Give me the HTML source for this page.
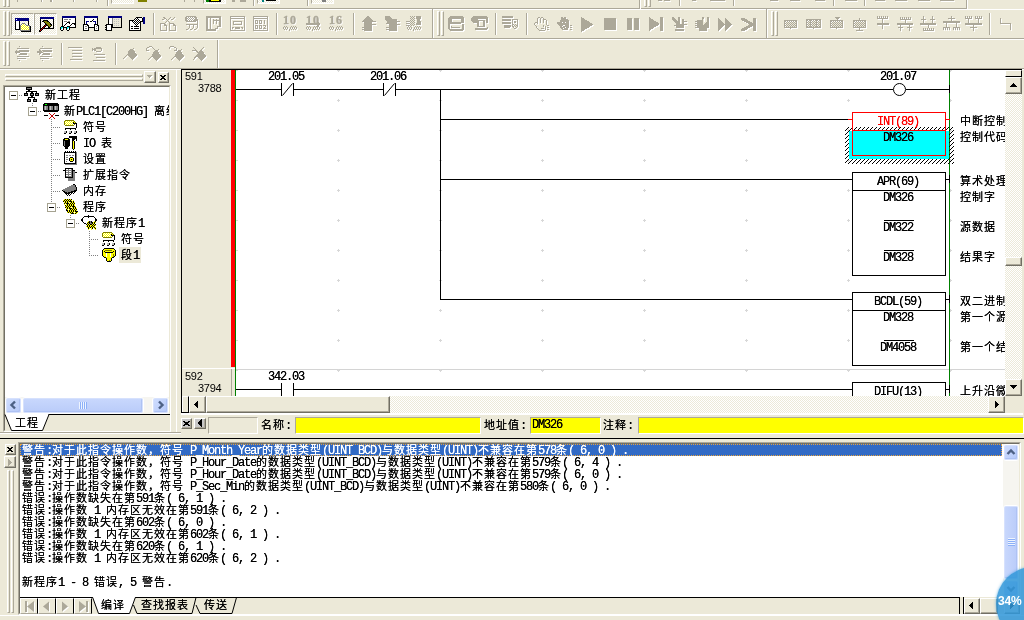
<!DOCTYPE html>
<html><head><meta charset="utf-8"><title>CX-Programmer</title>
<style>
html,body{margin:0;padding:0}
body{will-change:transform;width:1024px;height:620px;overflow:hidden;background:#ECE9D8;position:relative;
 font-family:"Liberation Sans","Noto Sans CJK SC",sans-serif;font-size:12px;color:#000}
body div{position:absolute;box-sizing:border-box}
svg{position:absolute;overflow:visible}
.t{white-space:pre;text-shadow:0 0 0;margin-top:1px;line-height:12px;height:12px;font-size:11px;letter-spacing:1px;font-family:"Liberation Mono","Noto Sans CJK SC",monospace}
.l{font-family:"Liberation Mono",monospace;font-size:12px;letter-spacing:-1.2px}
</style></head>
<body>
<div style="left:0px;top:8px;width:967px;height:1px;background:#ACA899;"></div>
<div style="left:0px;top:9px;width:1024px;height:1px;background:#fff;"></div>
<div style="left:0px;top:38px;width:1024px;height:1px;background:#ACA899;"></div>
<div style="left:0px;top:39px;width:1024px;height:1px;background:#fff;"></div>
<div style="left:0px;top:68px;width:1024px;height:1px;background:#ACA899;"></div>
<div style="left:0px;top:69px;width:1024px;height:1px;background:#fff;"></div>
<div style="left:3px;top:11px;width:3px;height:25px;border-left:1px solid #fff;border-top:1px solid #fff;border-right:1px solid #ACA899;border-bottom:1px solid #ACA899;"></div>
<div style="left:7px;top:11px;width:3px;height:25px;border-left:1px solid #fff;border-top:1px solid #fff;border-right:1px solid #ACA899;border-bottom:1px solid #ACA899;"></div>
<div style="left:3px;top:41px;width:3px;height:25px;border-left:1px solid #fff;border-top:1px solid #fff;border-right:1px solid #ACA899;border-bottom:1px solid #ACA899;"></div>
<div style="left:7px;top:41px;width:3px;height:25px;border-left:1px solid #fff;border-top:1px solid #fff;border-right:1px solid #ACA899;border-bottom:1px solid #ACA899;"></div>
<div style="left:11px;top:13px;width:23px;height:22px;border-top:1px solid #ACA899;border-left:1px solid #ACA899;border-right:1px solid #fff;border-bottom:1px solid #fff;background-image:conic-gradient(#fff 25%,#ECE9D8 0 50%,#fff 0 75%,#ECE9D8 0);background-size:2px 2px;"></div>
<div style="left:34px;top:13px;width:23px;height:22px;border-top:1px solid #ACA899;border-left:1px solid #ACA899;border-right:1px solid #fff;border-bottom:1px solid #fff;background-image:conic-gradient(#fff 25%,#ECE9D8 0 50%,#fff 0 75%,#ECE9D8 0);background-size:2px 2px;"></div>
<svg style="left:15px;top:18px" width="16" height="14" shape-rendering="crispEdges"><path d="M0 0h14v1h-14zM0 1h1v1h-1zM2 1h12v1h-12zM0 2h14v1h-14z" fill="#000080"/><path d="M1 1h1v1h-1zM1 3h3v1h-3zM1 4h3v1h-3zM1 5h3v1h-3zM1 6h3v1h-3zM7 6h1v1h-1zM9 6h1v1h-1zM1 7h3v1h-3zM6 7h1v1h-1zM8 7h1v1h-1zM10 7h1v1h-1zM1 8h3v1h-3zM7 8h1v1h-1zM9 8h1v1h-1zM11 8h1v1h-1zM13 8h1v1h-1zM1 9h3v1h-3zM6 9h1v1h-1zM8 9h1v1h-1zM10 9h1v1h-1zM12 9h1v1h-1zM1 10h3v1h-3zM7 10h1v1h-1zM9 10h1v1h-1zM11 10h1v1h-1zM13 10h1v1h-1zM6 11h1v1h-1zM8 11h1v1h-1zM10 11h1v1h-1zM12 11h1v1h-1z" fill="#fff"/><path d="M0 3h1v1h-1zM4 3h1v1h-1zM13 3h1v1h-1zM0 4h1v1h-1zM4 4h1v1h-1zM13 4h1v1h-1zM0 5h1v1h-1zM4 5h1v1h-1zM13 5h1v1h-1zM0 6h1v1h-1zM4 6h1v1h-1zM13 6h1v1h-1zM0 7h1v1h-1zM4 7h1v1h-1zM0 8h1v1h-1zM4 8h1v1h-1zM15 8h1v1h-1zM0 9h1v1h-1zM4 9h1v1h-1zM15 9h1v1h-1zM0 10h1v1h-1zM4 10h1v1h-1zM15 10h1v1h-1zM0 11h5v1h-5zM15 11h1v1h-1zM15 12h1v1h-1zM6 13h10v1h-10z" fill="#000"/><path d="M7 5h3v1h-3zM6 6h1v1h-1zM10 6h1v1h-1zM5 7h1v1h-1zM11 7h4v1h-4zM5 8h1v1h-1zM14 8h1v1h-1zM5 9h1v1h-1zM14 9h1v1h-1zM5 10h1v1h-1zM14 10h1v1h-1zM5 11h1v1h-1zM14 11h1v1h-1zM5 12h10v1h-10z" fill="#808080"/><path d="M8 6h1v1h-1zM7 7h1v1h-1zM9 7h1v1h-1zM6 8h1v1h-1zM8 8h1v1h-1zM10 8h1v1h-1zM12 8h1v1h-1zM7 9h1v1h-1zM9 9h1v1h-1zM11 9h1v1h-1zM13 9h1v1h-1zM6 10h1v1h-1zM8 10h1v1h-1zM10 10h1v1h-1zM12 10h1v1h-1zM7 11h1v1h-1zM9 11h1v1h-1zM11 11h1v1h-1zM13 11h1v1h-1z" fill="#ffff00"/></svg>
<svg style="left:38px;top:17px" width="16" height="15" shape-rendering="crispEdges"><path d="M2 0h14v1h-14zM2 1h14v1h-14z" fill="#000080"/><path d="M2 2h1v1h-1zM15 2h1v1h-1zM2 3h1v1h-1zM5 3h5v1h-5zM15 3h1v1h-1zM2 4h1v1h-1zM4 4h2v1h-2zM9 4h2v1h-2zM15 4h1v1h-1zM2 5h1v1h-1zM6 5h1v1h-1zM11 5h1v1h-1zM15 5h1v1h-1zM2 6h1v1h-1zM7 6h1v1h-1zM12 6h1v1h-1zM15 6h1v1h-1zM2 7h1v1h-1zM7 7h2v1h-2zM12 7h2v1h-2zM15 7h1v1h-1zM2 8h1v1h-1zM6 8h1v1h-1zM8 8h2v1h-2zM13 8h1v1h-1zM15 8h1v1h-1zM2 9h1v1h-1zM5 9h1v1h-1zM7 9h1v1h-1zM10 9h1v1h-1zM12 9h1v1h-1zM15 9h1v1h-1zM2 10h1v1h-1zM4 10h1v1h-1zM6 10h1v1h-1zM10 10h2v1h-2zM15 10h1v1h-1zM2 11h2v1h-2zM5 11h11v1h-11zM2 12h1v1h-1zM4 12h1v1h-1zM1 13h1v1h-1zM3 13h1v1h-1zM1 14h2v1h-2z" fill="#000"/><path d="M6 4h3v1h-3zM7 5h4v1h-4zM8 6h4v1h-4zM9 7h3v1h-3zM10 8h3v1h-3zM11 9h1v1h-1z" fill="#808000"/><path d="M7 8h1v1h-1zM6 9h1v1h-1zM5 10h1v1h-1zM4 11h1v1h-1zM3 12h1v1h-1zM2 13h1v1h-1z" fill="#c00000"/></svg>
<svg style="left:60px;top:16px" width="16" height="15" shape-rendering="crispEdges"><path d="M2 0h14v1h-14zM2 1h14v1h-14z" fill="#000080"/><path d="M2 2h1v1h-1zM15 2h1v1h-1zM2 3h1v1h-1zM15 3h1v1h-1zM2 4h1v1h-1zM15 4h1v1h-1zM2 5h1v1h-1zM15 5h1v1h-1zM2 6h1v1h-1zM7 6h3v1h-3zM15 6h1v1h-1zM2 7h1v1h-1zM6 7h1v1h-1zM9 7h1v1h-1zM12 7h4v1h-4zM2 8h1v1h-1zM5 8h1v1h-1zM11 8h1v1h-1zM14 8h2v1h-2zM2 9h1v1h-1zM4 9h1v1h-1zM10 9h1v1h-1zM15 9h1v1h-1zM1 10h3v1h-3zM7 10h3v1h-3zM15 10h1v1h-1zM0 11h1v1h-1zM3 11h4v1h-4zM9 11h7v1h-7zM0 12h1v1h-1zM3 12h1v1h-1zM6 12h1v1h-1zM9 12h1v1h-1zM0 13h1v1h-1zM3 13h1v1h-1zM6 13h1v1h-1zM9 13h1v1h-1zM1 14h2v1h-2zM7 14h2v1h-2z" fill="#000"/><path d="M3 2h12v1h-12zM3 3h1v1h-1zM8 3h1v1h-1zM11 3h4v1h-4zM3 4h12v1h-12zM3 5h1v1h-1zM7 5h1v1h-1zM10 5h5v1h-5zM3 6h4v1h-4zM10 6h5v1h-5zM3 7h3v1h-3zM7 7h2v1h-2zM10 7h2v1h-2zM3 8h2v1h-2zM6 8h5v1h-5zM12 8h2v1h-2zM3 9h1v1h-1zM5 9h5v1h-5zM11 9h4v1h-4zM4 10h3v1h-3zM10 10h5v1h-5zM2 12h1v1h-1zM8 12h1v1h-1zM1 13h2v1h-2zM7 13h2v1h-2z" fill="#fff"/><path d="M4 3h4v1h-4zM9 3h2v1h-2zM4 5h3v1h-3zM8 5h2v1h-2z" fill="#808080"/><path d="M1 11h2v1h-2zM7 11h2v1h-2zM1 12h1v1h-1zM7 12h1v1h-1z" fill="#00ffff"/></svg>
<svg style="left:83px;top:16px" width="16" height="15" shape-rendering="crispEdges"><path d="M1 0h14v1h-14zM1 1h14v1h-14zM3 5h3v1h-3zM10 5h3v1h-3zM3 6h1v1h-1zM12 6h1v1h-1zM3 7h1v1h-1zM12 7h1v1h-1z" fill="#000080"/><path d="M1 2h1v1h-1zM14 2h1v1h-1zM1 3h1v1h-1zM10 3h1v1h-1zM14 3h1v1h-1zM1 4h1v1h-1zM9 4h1v1h-1zM14 4h1v1h-1zM1 5h1v1h-1zM7 5h2v1h-2zM14 5h1v1h-1zM1 6h1v1h-1zM14 6h1v1h-1zM1 7h1v1h-1zM14 7h1v1h-1zM0 8h5v1h-5zM11 8h4v1h-4zM0 9h1v1h-1zM4 9h2v1h-2zM11 9h1v1h-1zM14 9h2v1h-2zM0 10h1v1h-1zM5 10h1v1h-1zM11 10h1v1h-1zM15 10h1v1h-1zM0 11h1v1h-1zM5 11h7v1h-7zM15 11h1v1h-1zM0 12h1v1h-1zM5 12h1v1h-1zM11 12h1v1h-1zM15 12h1v1h-1zM0 13h1v1h-1zM5 13h1v1h-1zM11 13h1v1h-1zM15 13h1v1h-1zM0 14h6v1h-6zM11 14h5v1h-5z" fill="#000"/><path d="M2 2h12v1h-12zM2 3h8v1h-8zM11 3h3v1h-3zM2 4h7v1h-7zM10 4h4v1h-4zM2 5h1v1h-1zM6 5h1v1h-1zM9 5h1v1h-1zM13 5h1v1h-1zM2 6h1v1h-1zM4 6h8v1h-8zM13 6h1v1h-1zM2 7h1v1h-1zM4 7h8v1h-8zM13 7h1v1h-1zM5 8h6v1h-6zM1 9h3v1h-3zM6 9h5v1h-5zM12 9h2v1h-2zM1 10h1v1h-1zM4 10h1v1h-1zM6 10h5v1h-5zM12 10h1v1h-1zM14 10h1v1h-1zM1 11h4v1h-4zM12 11h3v1h-3zM1 12h1v1h-1zM4 12h1v1h-1zM12 12h1v1h-1zM14 12h1v1h-1zM1 13h4v1h-4zM12 13h3v1h-3z" fill="#fff"/><path d="M2 10h2v1h-2zM13 10h1v1h-1zM2 12h2v1h-2zM13 12h1v1h-1z" fill="#808080"/></svg>
<svg style="left:105px;top:16px" width="17" height="15" shape-rendering="crispEdges"><path d="M3 0h14v1h-14zM3 1h14v1h-14z" fill="#000080"/><path d="M3 2h1v1h-1zM16 2h1v1h-1zM3 3h1v1h-1zM16 3h1v1h-1zM3 4h1v1h-1zM16 4h1v1h-1zM3 5h1v1h-1zM16 5h1v1h-1zM3 6h1v1h-1zM16 6h1v1h-1zM3 7h1v1h-1zM16 7h1v1h-1zM1 8h7v1h-7zM16 8h1v1h-1zM0 9h2v1h-2zM6 9h2v1h-2zM16 9h1v1h-1zM1 10h1v1h-1zM6 10h2v1h-2zM16 10h1v1h-1zM0 11h2v1h-2zM6 11h11v1h-11zM1 12h1v1h-1zM6 12h1v1h-1zM0 13h2v1h-2zM6 13h1v1h-1zM1 14h6v1h-6z" fill="#000"/><path d="M4 2h3v1h-3zM4 3h3v1h-3zM4 4h3v1h-3zM4 5h3v1h-3zM4 6h3v1h-3zM4 7h3v1h-3zM2 9h4v1h-4zM2 10h4v1h-4zM2 11h4v1h-4zM2 12h4v1h-4zM2 13h4v1h-4z" fill="#fff"/><path d="M7 2h1v1h-1zM7 3h1v1h-1zM7 4h1v1h-1zM7 5h1v1h-1zM7 6h1v1h-1zM7 7h1v1h-1z" fill="#808080"/><path d="M8 2h8v1h-8zM8 3h1v1h-1zM10 3h1v1h-1zM12 3h1v1h-1zM14 3h2v1h-2zM8 4h8v1h-8zM8 5h1v1h-1zM10 5h1v1h-1zM12 5h1v1h-1zM14 5h2v1h-2zM8 6h8v1h-8zM8 7h1v1h-1zM10 7h1v1h-1zM12 7h1v1h-1zM14 7h2v1h-2zM8 8h8v1h-8zM8 9h1v1h-1zM10 9h1v1h-1zM12 9h1v1h-1zM14 9h2v1h-2zM8 10h8v1h-8z" fill="#ECE9D8"/><path d="M9 3h1v1h-1zM11 3h1v1h-1zM13 3h1v1h-1zM9 5h1v1h-1zM11 5h1v1h-1zM13 5h1v1h-1zM9 7h1v1h-1zM11 7h1v1h-1zM13 7h1v1h-1zM9 9h1v1h-1zM11 9h1v1h-1zM13 9h1v1h-1z" fill="#C0C0C0"/></svg>
<svg style="left:129px;top:17px" width="16" height="14" shape-rendering="crispEdges"><path d="M7 0h6v1h-6zM6 1h1v1h-1zM8 1h1v1h-1zM13 1h1v1h-1zM5 2h1v1h-1zM7 2h1v1h-1zM9 2h1v1h-1zM13 2h1v1h-1zM0 3h5v1h-5zM6 3h1v1h-1zM8 3h1v1h-1zM10 3h1v1h-1zM13 3h1v1h-1zM0 4h1v1h-1zM3 4h1v1h-1zM5 4h1v1h-1zM7 4h1v1h-1zM9 4h1v1h-1zM11 4h3v1h-3zM0 5h1v1h-1zM4 5h1v1h-1zM6 5h1v1h-1zM8 5h1v1h-1zM10 5h2v1h-2zM0 6h1v1h-1zM5 6h1v1h-1zM7 6h1v1h-1zM9 6h1v1h-1zM11 6h1v1h-1zM0 7h1v1h-1zM6 7h1v1h-1zM8 7h1v1h-1zM11 7h1v1h-1zM0 8h1v1h-1zM7 8h1v1h-1zM11 8h1v1h-1zM0 9h1v1h-1zM2 9h2v1h-2zM5 9h5v1h-5zM11 9h1v1h-1zM0 10h1v1h-1zM11 10h1v1h-1zM0 11h1v1h-1zM2 11h2v1h-2zM5 11h5v1h-5zM11 11h1v1h-1zM0 12h1v1h-1zM11 12h1v1h-1zM0 13h12v1h-12z" fill="#000"/><path d="M14 0h2v1h-2zM14 1h2v1h-2zM14 2h2v1h-2zM14 3h2v1h-2zM14 4h2v1h-2zM14 5h2v1h-2zM14 6h2v1h-2z" fill="#000080"/><path d="M7 1h1v1h-1zM9 1h4v1h-4zM6 2h1v1h-1zM8 2h1v1h-1zM10 2h3v1h-3zM5 3h1v1h-1zM7 3h1v1h-1zM9 3h1v1h-1zM11 3h2v1h-2zM1 4h2v1h-2zM4 4h1v1h-1zM6 4h1v1h-1zM8 4h1v1h-1zM10 4h1v1h-1zM1 5h3v1h-3zM5 5h1v1h-1zM7 5h1v1h-1zM9 5h1v1h-1zM1 6h4v1h-4zM6 6h1v1h-1zM8 6h1v1h-1zM10 6h1v1h-1zM1 7h5v1h-5zM7 7h1v1h-1zM9 7h2v1h-2zM1 8h6v1h-6zM8 8h3v1h-3zM1 9h1v1h-1zM4 9h1v1h-1zM10 9h1v1h-1zM1 10h10v1h-10zM1 11h1v1h-1zM4 11h1v1h-1zM10 11h1v1h-1zM1 12h10v1h-10z" fill="#fff"/></svg>
<div style="left:153px;top:13px;width:1px;height:22px;background:#ACA899;"></div>
<div style="left:154px;top:13px;width:1px;height:22px;background:#fff;"></div>
<div style="left:276px;top:13px;width:1px;height:22px;background:#ACA899;"></div>
<div style="left:277px;top:13px;width:1px;height:22px;background:#fff;"></div>
<div style="left:353px;top:13px;width:1px;height:22px;background:#ACA899;"></div>
<div style="left:354px;top:13px;width:1px;height:22px;background:#fff;"></div>
<div style="left:495px;top:13px;width:1px;height:22px;background:#ACA899;"></div>
<div style="left:496px;top:13px;width:1px;height:22px;background:#fff;"></div>
<div style="left:526px;top:13px;width:1px;height:22px;background:#ACA899;"></div>
<div style="left:527px;top:13px;width:1px;height:22px;background:#fff;"></div>
<div style="left:989px;top:13px;width:1px;height:22px;background:#ACA899;"></div>
<div style="left:990px;top:13px;width:1px;height:22px;background:#fff;"></div>
<div style="left:61px;top:43px;width:1px;height:22px;background:#ACA899;"></div>
<div style="left:62px;top:43px;width:1px;height:22px;background:#fff;"></div>
<div style="left:115px;top:43px;width:1px;height:22px;background:#ACA899;"></div>
<div style="left:116px;top:43px;width:1px;height:22px;background:#fff;"></div>
<div style="left:432px;top:9px;width:1px;height:29px;background:#ACA899;"></div>
<div style="left:433px;top:9px;width:1px;height:29px;background:#fff;"></div>
<div style="left:766px;top:9px;width:1px;height:29px;background:#ACA899;"></div>
<div style="left:767px;top:9px;width:1px;height:29px;background:#fff;"></div>
<div style="left:217px;top:40px;width:1px;height:28px;background:#ACA899;"></div>
<div style="left:218px;top:40px;width:1px;height:28px;background:#fff;"></div>
<div style="left:437px;top:11px;width:3px;height:25px;border-left:1px solid #fff;border-top:1px solid #fff;border-right:1px solid #ACA899;border-bottom:1px solid #ACA899;"></div>
<div style="left:441px;top:11px;width:3px;height:25px;border-left:1px solid #fff;border-top:1px solid #fff;border-right:1px solid #ACA899;border-bottom:1px solid #ACA899;"></div>
<div style="left:771px;top:11px;width:3px;height:25px;border-left:1px solid #fff;border-top:1px solid #fff;border-right:1px solid #ACA899;border-bottom:1px solid #ACA899;"></div>
<div style="left:775px;top:11px;width:3px;height:25px;border-left:1px solid #fff;border-top:1px solid #fff;border-right:1px solid #ACA899;border-bottom:1px solid #ACA899;"></div>
<svg style="left:160px;top:14px" width="17" height="18" shape-rendering="crispEdges"><g transform="translate(1,1)"><path d="M2 5h2v1h-2zM11 5h2v1h-2zM13 4h1v1h-1zM14 3h1v1h-1zM4 4h1v1h-1zM3 3h1v1h-1z" fill="#fff"/><path d="M0.5 9.5h4l2 2v5h-6z M4.5 9.5v2h2 M9.5 9.5h4l2 2v5h-6z M13.5 9.5v2h2 M4.5 3.5l6 6 M10.5 3.5l-6 6" stroke="#fff" fill="none"/></g><path d="M2 5h2v1h-2zM11 5h2v1h-2zM13 4h1v1h-1zM14 3h1v1h-1zM4 4h1v1h-1zM3 3h1v1h-1z" fill="#ACA899"/><path d="M0.5 9.5h4l2 2v5h-6z M4.5 9.5v2h2 M9.5 9.5h4l2 2v5h-6z M13.5 9.5v2h2 M4.5 3.5l6 6 M10.5 3.5l-6 6" stroke="#ACA899" fill="none"/></svg>
<svg style="left:185px;top:14px" width="15" height="18" shape-rendering="crispEdges"><g transform="translate(1,1)"><path d="M1 2h9l2 2v2l-2 2h-9l-1-1v-4zM1 10h12v1h-12zM12 5h1v5h-1zM4 11h1v3h-1zM3 14h1v1h-1zM1 15h2v1h-2zM8 11h1v3h-1zM7 14h1v1h-1zM5 15h2v1h-2zM12 11h1v3h-1zM11 14h1v1h-1zM9 15h2v1h-2z" fill="#fff"/></g><path d="M1 2h9l2 2v2l-2 2h-9l-1-1v-4zM1 10h12v1h-12zM12 5h1v5h-1zM4 11h1v3h-1zM3 14h1v1h-1zM1 15h2v1h-2zM8 11h1v3h-1zM7 14h1v1h-1zM5 15h2v1h-2zM12 11h1v3h-1zM11 14h1v1h-1zM9 15h2v1h-2z" fill="#ACA899"/><path d="M2 3h1v1h-1zM4 3h1v1h-1zM6 3h1v1h-1zM8 3h1v1h-1zM2 5h1v1h-1zM4 5h1v1h-1zM6 5h1v1h-1zM8 5h1v1h-1zM3 4h1v1h-1zM5 4h1v1h-1zM7 4h1v1h-1zM9 4h1v1h-1zM3 6h1v1h-1zM5 6h1v1h-1zM7 6h1v1h-1z" fill="#fff"/></svg>
<svg style="left:206px;top:16px" width="16" height="16" shape-rendering="crispEdges"><g transform="translate(1,1)"><path d="M0 0h15v2h-15zM0 0h2v15h-2zM4 2h1v11h-1zM7 3h1v5h-1zM10 3h1v5h-1zM8 4h6v1h-6zM13 2h2v8h-2zM11 10h4v1h-4zM11 10h1v2h-1zM9 12h3v1h-3zM9 12h1v2h-1zM2 13h8v2h-8z" fill="#fff"/></g><path d="M0 0h15v2h-15zM0 0h2v15h-2zM4 2h1v11h-1zM7 3h1v5h-1zM10 3h1v5h-1zM8 4h6v1h-6zM13 2h2v8h-2zM11 10h4v1h-4zM11 10h1v2h-1zM9 12h3v1h-3zM9 12h1v2h-1zM2 13h8v2h-8z" fill="#ACA899"/></svg>
<svg style="left:230px;top:16px" width="16" height="16" shape-rendering="crispEdges"><g transform="translate(1,1)"><path d="M0 0h15v1h-15zM0 2h15v1h-15zM0 0h1v15h-1zM14 0h1v15h-1zM0 14h15v1h-15zM3 5h9v1h-9zM3 8h9v1h-9zM3 5h1v4h-1zM11 5h1v4h-1zM2 11h2v1h-2zM5 11h5v1h-5zM11 11h2v1h-2zM2 12h1v1h-1zM5 12h5v1h-5zM12 12h1v1h-1z" fill="#fff"/></g><path d="M0 0h15v1h-15zM0 2h15v1h-15zM0 0h1v15h-1zM14 0h1v15h-1zM0 14h15v1h-15zM3 5h9v1h-9zM3 8h9v1h-9zM3 5h1v4h-1zM11 5h1v4h-1zM2 11h2v1h-2zM5 11h5v1h-5zM11 11h2v1h-2zM2 12h1v1h-1zM5 12h5v1h-5zM12 12h1v1h-1z" fill="#ACA899"/></svg>
<svg style="left:253px;top:16px" width="16" height="16" shape-rendering="crispEdges"><g transform="translate(1,1)"><path d="M0 0h15v1h-15zM0 2h15v1h-15zM0 0h1v15h-1zM14 0h1v15h-1zM0 14h15v1h-15zM2 4h3v1h-3zM2 7h3v1h-3zM2 4h1v4h-1zM4 4h1v4h-1zM6 4h3v1h-3zM6 7h3v1h-3zM6 4h1v4h-1zM8 4h1v4h-1zM11 4h1v4h-1zM2 9h3v1h-3zM2 12h3v1h-3zM2 9h1v4h-1zM4 9h1v4h-1zM6 9h3v1h-3zM6 12h3v1h-3zM6 9h1v4h-1zM8 9h1v4h-1zM10 9h3v1h-3zM12 10h1v1h-1zM11 11h1v1h-1zM10 12h3v1h-3z" fill="#fff"/></g><path d="M0 0h15v1h-15zM0 2h15v1h-15zM0 0h1v15h-1zM14 0h1v15h-1zM0 14h15v1h-15zM2 4h3v1h-3zM2 7h3v1h-3zM2 4h1v4h-1zM4 4h1v4h-1zM6 4h3v1h-3zM6 7h3v1h-3zM6 4h1v4h-1zM8 4h1v4h-1zM11 4h1v4h-1zM2 9h3v1h-3zM2 12h3v1h-3zM2 9h1v4h-1zM4 9h1v4h-1zM6 9h3v1h-3zM6 12h3v1h-3zM6 9h1v4h-1zM8 9h1v4h-1zM10 9h3v1h-3zM12 10h1v1h-1zM11 11h1v1h-1zM10 12h3v1h-3z" fill="#ACA899"/></svg>
<div style="left:283px;top:13px;width:20px;height:14px;font:bold 12px/14px 'Liberation Serif',serif;color:#ACA899;text-shadow:1px 1px 0 #fff;letter-spacing:1px;-webkit-text-stroke:0.4px #ACA899">10</div>
<svg style="left:283px;top:16px" width="17" height="16" shape-rendering="crispEdges"><g transform="translate(1,1)"><path d="M0 11h1v1h-1zM0 12h1v1h-1zM1 10h1v1h-1zM1 13h1v1h-1zM3 10h1v1h-1zM4 11h1v1h-1zM4 12h1v1h-1zM3 13h1v1h-1zM2 11h1v1h-1zM2 12h1v1h-1zM6 13h1v1h-1zM6 14h1v1h-1zM8 10h1v1h-1zM9 11h1v1h-1zM9 12h1v1h-1zM8 13h1v1h-1zM7 11h1v1h-1zM7 12h1v1h-1zM10 10h1v1h-1zM11 11h1v1h-1zM11 12h1v1h-1zM10 13h1v1h-1zM12 10h1v1h-1zM13 11h1v1h-1zM13 12h1v1h-1zM12 13h1v1h-1z" fill="#fff"/></g><path d="M0 11h1v1h-1zM0 12h1v1h-1zM1 10h1v1h-1zM1 13h1v1h-1zM3 10h1v1h-1zM4 11h1v1h-1zM4 12h1v1h-1zM3 13h1v1h-1zM2 11h1v1h-1zM2 12h1v1h-1zM6 13h1v1h-1zM6 14h1v1h-1zM8 10h1v1h-1zM9 11h1v1h-1zM9 12h1v1h-1zM8 13h1v1h-1zM7 11h1v1h-1zM7 12h1v1h-1zM10 10h1v1h-1zM11 11h1v1h-1zM11 12h1v1h-1zM10 13h1v1h-1zM12 10h1v1h-1zM13 11h1v1h-1zM13 12h1v1h-1zM12 13h1v1h-1z" fill="#ACA899"/></svg>
<div style="left:306px;top:13px;width:20px;height:14px;font:bold 12px/14px 'Liberation Serif',serif;color:#ACA899;text-shadow:1px 1px 0 #fff;letter-spacing:1px;-webkit-text-stroke:0.4px #ACA899">10</div>
<svg style="left:306px;top:16px" width="17" height="16" shape-rendering="crispEdges"><g transform="translate(1,1)"><path d="M0 11h1v1h-1zM0 12h1v1h-1zM1 10h1v1h-1zM1 13h1v1h-1zM3 10h1v1h-1zM4 11h1v1h-1zM4 12h1v1h-1zM3 13h1v1h-1zM2 11h1v1h-1zM2 12h1v1h-1zM6 13h1v1h-1zM6 14h1v1h-1zM8 10h1v1h-1zM9 11h1v1h-1zM9 12h1v1h-1zM8 13h1v1h-1zM7 11h1v1h-1zM7 12h1v1h-1zM10 10h1v1h-1zM11 11h1v1h-1zM11 12h1v1h-1zM10 13h1v1h-1zM12 10h1v1h-1zM13 11h1v1h-1zM13 12h1v1h-1zM12 13h1v1h-1zM0 7h14v2h-14zM11 5l4 3l-4 3z" fill="#fff"/></g><path d="M0 11h1v1h-1zM0 12h1v1h-1zM1 10h1v1h-1zM1 13h1v1h-1zM3 10h1v1h-1zM4 11h1v1h-1zM4 12h1v1h-1zM3 13h1v1h-1zM2 11h1v1h-1zM2 12h1v1h-1zM6 13h1v1h-1zM6 14h1v1h-1zM8 10h1v1h-1zM9 11h1v1h-1zM9 12h1v1h-1zM8 13h1v1h-1zM7 11h1v1h-1zM7 12h1v1h-1zM10 10h1v1h-1zM11 11h1v1h-1zM11 12h1v1h-1zM10 13h1v1h-1zM12 10h1v1h-1zM13 11h1v1h-1zM13 12h1v1h-1zM12 13h1v1h-1zM0 7h14v2h-14zM11 5l4 3l-4 3z" fill="#ACA899"/></svg>
<div style="left:329px;top:13px;width:20px;height:14px;font:bold 12px/14px 'Liberation Serif',serif;color:#ACA899;text-shadow:1px 1px 0 #fff;letter-spacing:1px;-webkit-text-stroke:0.4px #ACA899">16</div>
<svg style="left:329px;top:16px" width="17" height="16" shape-rendering="crispEdges"><g transform="translate(1,1)"><path d="M0 11h1v1h-1zM0 12h1v1h-1zM1 10h1v1h-1zM1 13h1v1h-1zM3 10h1v1h-1zM4 11h1v1h-1zM4 12h1v1h-1zM3 13h1v1h-1zM2 11h1v1h-1zM2 12h1v1h-1zM6 13h1v1h-1zM6 14h1v1h-1zM8 10h1v1h-1zM9 11h1v1h-1zM9 12h1v1h-1zM8 13h1v1h-1zM7 11h1v1h-1zM7 12h1v1h-1zM10 10h1v1h-1zM11 11h1v1h-1zM11 12h1v1h-1zM10 13h1v1h-1zM12 10h1v1h-1zM13 11h1v1h-1zM13 12h1v1h-1zM12 13h1v1h-1z" fill="#fff"/></g><path d="M0 11h1v1h-1zM0 12h1v1h-1zM1 10h1v1h-1zM1 13h1v1h-1zM3 10h1v1h-1zM4 11h1v1h-1zM4 12h1v1h-1zM3 13h1v1h-1zM2 11h1v1h-1zM2 12h1v1h-1zM6 13h1v1h-1zM6 14h1v1h-1zM8 10h1v1h-1zM9 11h1v1h-1zM9 12h1v1h-1zM8 13h1v1h-1zM7 11h1v1h-1zM7 12h1v1h-1zM10 10h1v1h-1zM11 11h1v1h-1zM11 12h1v1h-1zM10 13h1v1h-1zM12 10h1v1h-1zM13 11h1v1h-1zM13 12h1v1h-1zM12 13h1v1h-1z" fill="#ACA899"/></svg>
<svg style="left:361px;top:16px" width="17" height="16" shape-rendering="crispEdges"><g transform="translate(1,1)"><path d="M6 0h1l6 6h-2v9h-8v-9h-3zM11 5h4v1h-4zM11 8h4v1h-4zM1 11h2v1h-2zM1 13h2v1h-2z" fill="#fff"/></g><path d="M6 0h1l6 6h-2v9h-8v-9h-3zM11 5h4v1h-4zM11 8h4v1h-4zM1 11h2v1h-2zM1 13h2v1h-2z" fill="#ACA899"/></svg>
<svg style="left:385px;top:16px" width="17" height="16" shape-rendering="crispEdges"><g transform="translate(1,1)"><path d="M0 0h5l2 3h5v12h-8v-7h-4l2-2l-2-2zM12 5h3v1h-3zM12 8h3v1h-3zM1 11h3v1h-3zM1 13h3v1h-3z" fill="#fff"/></g><path d="M0 0h5l2 3h5v12h-8v-7h-4l2-2l-2-2zM12 5h3v1h-3zM12 8h3v1h-3zM1 11h3v1h-3zM1 13h3v1h-3z" fill="#ACA899"/></svg>
<svg style="left:406px;top:16px" width="18" height="16" shape-rendering="crispEdges"><g transform="translate(1,1)"><path d="M0 5h4v1h-4zM0 7h4v1h-4zM0 9h4v1h-4zM4 0h1v1h-1zM6 0h1v1h-1zM8 0h1v1h-1zM5 1h1v1h-1zM7 1h1v1h-1zM4 2h1v1h-1zM6 2h1v1h-1zM8 2h1v1h-1zM5 3h1v1h-1zM7 3h1v1h-1zM4 4h1v1h-1zM6 4h1v1h-1zM8 4h1v1h-1zM5 5h1v1h-1zM7 5h1v1h-1zM4 6h1v1h-1zM6 6h1v1h-1zM8 6h1v1h-1zM5 7h1v1h-1zM7 7h1v1h-1zM4 8h1v1h-1zM6 8h1v1h-1zM8 8h1v1h-1zM5 9h1v1h-1zM7 9h1v1h-1zM10 0h5v2l-1 1v2l1 1v3h-5v-2l1-1v-2l-1-1zM1 11h1v1h-1zM1 12h1v1h-1zM2 10h1v1h-1zM2 13h1v1h-1zM4 10h1v1h-1zM5 11h1v1h-1zM5 12h1v1h-1zM4 13h1v1h-1zM3 11h1v1h-1zM3 12h1v1h-1zM7 13h1v1h-1zM7 14h1v1h-1zM9 10h1v1h-1zM10 11h1v1h-1zM10 12h1v1h-1zM9 13h1v1h-1zM8 11h1v1h-1zM8 12h1v1h-1zM11 10h1v1h-1zM12 11h1v1h-1zM12 12h1v1h-1zM11 13h1v1h-1zM13 10h1v1h-1zM14 11h1v1h-1zM14 12h1v1h-1zM13 13h1v1h-1z" fill="#fff"/></g><path d="M0 5h4v1h-4zM0 7h4v1h-4zM0 9h4v1h-4zM4 0h1v1h-1zM6 0h1v1h-1zM8 0h1v1h-1zM5 1h1v1h-1zM7 1h1v1h-1zM4 2h1v1h-1zM6 2h1v1h-1zM8 2h1v1h-1zM5 3h1v1h-1zM7 3h1v1h-1zM4 4h1v1h-1zM6 4h1v1h-1zM8 4h1v1h-1zM5 5h1v1h-1zM7 5h1v1h-1zM4 6h1v1h-1zM6 6h1v1h-1zM8 6h1v1h-1zM5 7h1v1h-1zM7 7h1v1h-1zM4 8h1v1h-1zM6 8h1v1h-1zM8 8h1v1h-1zM5 9h1v1h-1zM7 9h1v1h-1zM10 0h5v2l-1 1v2l1 1v3h-5v-2l1-1v-2l-1-1zM1 11h1v1h-1zM1 12h1v1h-1zM2 10h1v1h-1zM2 13h1v1h-1zM4 10h1v1h-1zM5 11h1v1h-1zM5 12h1v1h-1zM4 13h1v1h-1zM3 11h1v1h-1zM3 12h1v1h-1zM7 13h1v1h-1zM7 14h1v1h-1zM9 10h1v1h-1zM10 11h1v1h-1zM10 12h1v1h-1zM9 13h1v1h-1zM8 11h1v1h-1zM8 12h1v1h-1zM11 10h1v1h-1zM12 11h1v1h-1zM12 12h1v1h-1zM11 13h1v1h-1zM13 10h1v1h-1zM14 11h1v1h-1zM14 12h1v1h-1zM13 13h1v1h-1z" fill="#ACA899"/></svg>
<svg style="left:448px;top:16px" width="17" height="16" shape-rendering="crispEdges"><g transform="translate(1,1)"><path d="M2 0h12l2 2v5h-3v-4h-9v3h9v2h-13v-6zM0 8h2v5h-2zM14 8h2v5h-2zM0 13h16l-2 2h-12zM4 11h8v1h-8zM3 10h1v2h-1z" fill="#fff"/></g><path d="M2 0h12l2 2v5h-3v-4h-9v3h9v2h-13v-6zM0 8h2v5h-2zM14 8h2v5h-2zM0 13h16l-2 2h-12zM4 11h8v1h-8zM3 10h1v2h-1z" fill="#ACA899"/></svg>
<svg style="left:471px;top:16px" width="18" height="16" shape-rendering="crispEdges"><g transform="translate(1,1)"><path d="M3 0h12l2 2v5h-2v-4h-8v4h-5l-2-2v-3zM6 4h8v1h-8zM6 10h8v1h-8zM6 4h2v7h-2zM12 4h2v7h-2zM4 12h11l2-2v2l-2 2h-11z" fill="#fff"/></g><path d="M3 0h12l2 2v5h-2v-4h-8v4h-5l-2-2v-3zM6 4h8v1h-8zM6 10h8v1h-8zM6 4h2v7h-2zM12 4h2v7h-2zM4 12h11l2-2v2l-2 2h-11z" fill="#ACA899"/></svg>
<svg style="left:502px;top:16px" width="17" height="16" shape-rendering="crispEdges"><g transform="translate(1,1)"><path d="M0 0h11v2h-11zM0 3h9v2h-9zM0 6h9v2h-9zM2 9h7v2h-7zM2 11h6v1h-6zM10 3h6v1h-6zM10 3h1v8h-1zM15 3h1v8h-1zM11 11h1v1h-1zM14 11h1v1h-1zM12 12h2v1h-2zM12 5h2v2h-2zM11 8h1v1h-1zM13 8h1v1h-1zM12 9h1v1h-1zM14 9h1v1h-1zM11 10h1v1h-1zM13 10h1v1h-1z" fill="#fff"/></g><path d="M0 0h11v2h-11zM0 3h9v2h-9zM0 6h9v2h-9zM2 9h7v2h-7zM2 11h6v1h-6zM10 3h6v1h-6zM10 3h1v8h-1zM15 3h1v8h-1zM11 11h1v1h-1zM14 11h1v1h-1zM12 12h2v1h-2zM12 5h2v2h-2zM11 8h1v1h-1zM13 8h1v1h-1zM12 9h1v1h-1zM14 9h1v1h-1zM11 10h1v1h-1zM13 10h1v1h-1z" fill="#ACA899"/></svg>
<svg style="left:534px;top:17px" width="16" height="15" shape-rendering="crispEdges"><g transform="translate(1,1)"><path d="M4 0h2v1h-2zM7 0h2v1h-2zM3 1h1v6h-1zM6 1h1v5h-1zM9 1h1v5h-1zM10 2h2v1h-2zM12 3h1v5h-1zM1 5h2v1h-2zM0 6h1v2h-1zM1 8h1v1h-1zM2 9h1v2h-1zM3 11h1v1h-1zM4 12h1v1h-1zM5 13h6v1h-6zM11 9h1v4h-1zM9 8h1v2h-1zM7 11h3v1h-3zM13 8h2v1h-2zM13 10h2v1h-2zM13 12h2v1h-2z" fill="#fff"/></g><path d="M4 0h2v1h-2zM7 0h2v1h-2zM3 1h1v6h-1zM6 1h1v5h-1zM9 1h1v5h-1zM10 2h2v1h-2zM12 3h1v5h-1zM1 5h2v1h-2zM0 6h1v2h-1zM1 8h1v1h-1zM2 9h1v2h-1zM3 11h1v1h-1zM4 12h1v1h-1zM5 13h6v1h-6zM11 9h1v4h-1zM9 8h1v2h-1zM7 11h3v1h-3zM13 8h2v1h-2zM13 10h2v1h-2zM13 12h2v1h-2z" fill="#ACA899"/></svg>
<svg style="left:557px;top:17px" width="16" height="15" shape-rendering="crispEdges"><g transform="translate(1,1)"><path d="M4 0h2v1h1v-1h2v2h2v1h1v6l-1 4h-6l-2-3l-3-3v-2h2l1 1zM13 8h2v1h-2zM13 10h2v1h-2zM13 12h2v1h-2z" fill="#fff"/></g><path d="M4 0h2v1h1v-1h2v2h2v1h1v6l-1 4h-6l-2-3l-3-3v-2h2l1 1zM13 8h2v1h-2zM13 10h2v1h-2zM13 12h2v1h-2z" fill="#ACA899"/><path d="M5 5h1v1h-1zM8 5h1v1h-1zM6 8h1v1h-1zM7 8h1v1h-1zM5 9h1v1h-1zM8 10h1v1h-1zM6 11h1v1h-1z" fill="#fff"/></svg>
<svg style="left:581px;top:17px" width="14" height="16" shape-rendering="crispEdges"><g transform="translate(1,1)"><path d="M0 0l12 7v1l-12 7z" fill="#fff"/></g><path d="M0 0l12 7v1l-12 7z" fill="#ACA899"/></svg>
<svg style="left:604px;top:18px" width="13" height="13" shape-rendering="crispEdges"><g transform="translate(1,1)"><path d="M0 0h12v12h-12z" fill="#fff"/></g><path d="M0 0h12v12h-12z" fill="#ACA899"/></svg>
<svg style="left:627px;top:18px" width="13" height="13" shape-rendering="crispEdges"><g transform="translate(1,1)"><path d="M0 0h5v12h-5zM7 0h5v12h-5z" fill="#fff"/></g><path d="M0 0h5v12h-5zM7 0h5v12h-5z" fill="#ACA899"/></svg>
<svg style="left:649px;top:17px" width="15" height="15" shape-rendering="crispEdges"><g transform="translate(1,1)"><path d="M0 0l11 7l-11 7zM11 0h3v14h-3z" fill="#fff"/></g><path d="M0 0l11 7l-11 7zM11 0h3v14h-3z" fill="#ACA899"/></svg>
<svg style="left:672px;top:17px" width="16" height="15" shape-rendering="crispEdges"><g transform="translate(1,1)"><path d="M0 0h1l5 5v-5h2v7h2v-5h2v2h3v1h-3v2h3v1h-3v3h-8v-2h-2v-1h2v-2h-1l-3-3zM3 12h9v2h-9z" fill="#fff"/></g><path d="M0 0h1l5 5v-5h2v7h2v-5h2v2h3v1h-3v2h3v1h-3v3h-8v-2h-2v-1h2v-2h-1l-3-3zM3 12h9v2h-9z" fill="#ACA899"/></svg>
<svg style="left:695px;top:17px" width="16" height="15" shape-rendering="crispEdges"><g transform="translate(1,1)"><path d="M2 3h5v-3h1l1 1v5l3-4v-2h2v11h-2v3h-8v-3h-2zM0 4h2v1h-2zM0 6h2v1h-2zM0 8h2v1h-2zM0 10h2v1h-2z" fill="#fff"/></g><path d="M2 3h5v-3h1l1 1v5l3-4v-2h2v11h-2v3h-8v-3h-2zM0 4h2v1h-2zM0 6h2v1h-2zM0 8h2v1h-2zM0 10h2v1h-2z" fill="#ACA899"/><path d="M8 2v6h1l3-4v-2l-3 4v-4z" fill="#ECE9D8"/></svg>
<svg style="left:718px;top:18px" width="16" height="14" shape-rendering="crispEdges"><g transform="translate(1,1)"><path d="M0 0l7 6v1l-7 6z M7 0l7 6v1l-7 6z" fill="#fff"/></g><path d="M0 0l7 6v1l-7 6z M7 0l7 6v1l-7 6z" fill="#ACA899"/></svg>
<svg style="left:741px;top:18px" width="17" height="14" shape-rendering="crispEdges"><g transform="translate(1,1)"><path d="M0 0h3l9 5v-5h3v13h-3v-5l-9 5h-3v-2l8-4v-1l-8-4z" fill="#fff"/></g><path d="M0 0h3l9 5v-5h3v13h-3v-5l-9 5h-3v-2l8-4v-1l-8-4z" fill="#ACA899"/></svg>
<svg style="left:784px;top:20px" width="14" height="10" shape-rendering="crispEdges"><g transform="translate(1,1)"><path d="M0 0h13v1h-13zM0 7h13v1h-13zM0 0h1v8h-1zM12 0h1v8h-1zM1 1h1v1h-1zM3 1h1v1h-1zM5 1h1v1h-1zM7 1h1v1h-1zM9 1h1v1h-1zM11 1h1v1h-1zM2 2h1v1h-1zM4 2h1v1h-1zM6 2h1v1h-1zM8 2h1v1h-1zM10 2h1v1h-1zM1 3h1v1h-1zM3 3h1v1h-1zM5 3h1v1h-1zM7 3h1v1h-1zM9 3h1v1h-1zM11 3h1v1h-1zM2 4h1v1h-1zM4 4h1v1h-1zM6 4h1v1h-1zM8 4h1v1h-1zM10 4h1v1h-1zM1 5h1v1h-1zM3 5h1v1h-1zM5 5h1v1h-1zM7 5h1v1h-1zM9 5h1v1h-1zM11 5h1v1h-1zM2 6h1v1h-1zM4 6h1v1h-1zM6 6h1v1h-1zM8 6h1v1h-1zM10 6h1v1h-1zM6 8h1v1h-1z" fill="#fff"/></g><path d="M0 0h13v1h-13zM0 7h13v1h-13zM0 0h1v8h-1zM12 0h1v8h-1zM1 1h1v1h-1zM3 1h1v1h-1zM5 1h1v1h-1zM7 1h1v1h-1zM9 1h1v1h-1zM11 1h1v1h-1zM2 2h1v1h-1zM4 2h1v1h-1zM6 2h1v1h-1zM8 2h1v1h-1zM10 2h1v1h-1zM1 3h1v1h-1zM3 3h1v1h-1zM5 3h1v1h-1zM7 3h1v1h-1zM9 3h1v1h-1zM11 3h1v1h-1zM2 4h1v1h-1zM4 4h1v1h-1zM6 4h1v1h-1zM8 4h1v1h-1zM10 4h1v1h-1zM1 5h1v1h-1zM3 5h1v1h-1zM5 5h1v1h-1zM7 5h1v1h-1zM9 5h1v1h-1zM11 5h1v1h-1zM2 6h1v1h-1zM4 6h1v1h-1zM6 6h1v1h-1zM8 6h1v1h-1zM10 6h1v1h-1zM6 8h1v1h-1z" fill="#ACA899"/></svg>
<svg style="left:806px;top:19px" width="16" height="11" shape-rendering="crispEdges"><g transform="translate(1,1)"><path d="M0 0h15v1h-15zM0 8h15v1h-15zM0 0h1v9h-1zM14 0h1v9h-1zM1 1h1v1h-1zM3 1h1v1h-1zM5 1h1v1h-1zM7 1h1v1h-1zM9 1h1v1h-1zM11 1h1v1h-1zM13 1h1v1h-1zM2 2h1v1h-1zM4 2h1v1h-1zM6 2h1v1h-1zM8 2h1v1h-1zM10 2h1v1h-1zM12 2h1v1h-1zM1 3h1v1h-1zM3 3h1v1h-1zM5 3h1v1h-1zM7 3h1v1h-1zM9 3h1v1h-1zM11 3h1v1h-1zM13 3h1v1h-1zM2 4h1v1h-1zM4 4h1v1h-1zM6 4h1v1h-1zM8 4h1v1h-1zM10 4h1v1h-1zM12 4h1v1h-1zM1 5h1v1h-1zM3 5h1v1h-1zM5 5h1v1h-1zM7 5h1v1h-1zM9 5h1v1h-1zM11 5h1v1h-1zM13 5h1v1h-1zM2 6h1v1h-1zM4 6h1v1h-1zM6 6h1v1h-1zM8 6h1v1h-1zM10 6h1v1h-1zM12 6h1v1h-1zM1 7h1v1h-1zM3 7h1v1h-1zM5 7h1v1h-1zM7 7h1v1h-1zM9 7h1v1h-1zM11 7h1v1h-1zM13 7h1v1h-1zM4 1h1v7h-1zM10 1h1v7h-1zM7 9h1v1h-1z" fill="#fff"/></g><path d="M0 0h15v1h-15zM0 8h15v1h-15zM0 0h1v9h-1zM14 0h1v9h-1zM1 1h1v1h-1zM3 1h1v1h-1zM5 1h1v1h-1zM7 1h1v1h-1zM9 1h1v1h-1zM11 1h1v1h-1zM13 1h1v1h-1zM2 2h1v1h-1zM4 2h1v1h-1zM6 2h1v1h-1zM8 2h1v1h-1zM10 2h1v1h-1zM12 2h1v1h-1zM1 3h1v1h-1zM3 3h1v1h-1zM5 3h1v1h-1zM7 3h1v1h-1zM9 3h1v1h-1zM11 3h1v1h-1zM13 3h1v1h-1zM2 4h1v1h-1zM4 4h1v1h-1zM6 4h1v1h-1zM8 4h1v1h-1zM10 4h1v1h-1zM12 4h1v1h-1zM1 5h1v1h-1zM3 5h1v1h-1zM5 5h1v1h-1zM7 5h1v1h-1zM9 5h1v1h-1zM11 5h1v1h-1zM13 5h1v1h-1zM2 6h1v1h-1zM4 6h1v1h-1zM6 6h1v1h-1zM8 6h1v1h-1zM10 6h1v1h-1zM12 6h1v1h-1zM1 7h1v1h-1zM3 7h1v1h-1zM5 7h1v1h-1zM7 7h1v1h-1zM9 7h1v1h-1zM11 7h1v1h-1zM13 7h1v1h-1zM4 1h1v7h-1zM10 1h1v7h-1zM7 9h1v1h-1z" fill="#ACA899"/></svg>
<svg style="left:830px;top:17px" width="15" height="13" shape-rendering="crispEdges"><g transform="translate(1,1)"><path d="M5 0h5l-2 3h-1zM0 3h13v8h-13z M1 4v6h11v-6zM1 4h1v1h-1zM3 4h1v1h-1zM5 4h1v1h-1zM7 4h1v1h-1zM9 4h1v1h-1zM11 4h1v1h-1zM2 5h1v1h-1zM4 5h1v1h-1zM6 5h1v1h-1zM8 5h1v1h-1zM10 5h1v1h-1zM1 6h1v1h-1zM3 6h1v1h-1zM5 6h1v1h-1zM7 6h1v1h-1zM9 6h1v1h-1zM11 6h1v1h-1zM2 7h1v1h-1zM4 7h1v1h-1zM6 7h1v1h-1zM8 7h1v1h-1zM10 7h1v1h-1zM1 8h1v1h-1zM3 8h1v1h-1zM5 8h1v1h-1zM7 8h1v1h-1zM9 8h1v1h-1zM11 8h1v1h-1zM2 9h1v1h-1zM4 9h1v1h-1zM6 9h1v1h-1zM8 9h1v1h-1zM10 9h1v1h-1zM6 11h1v1h-1z" fill="#fff"/></g><path d="M5 0h5l-2 3h-1zM0 3h13v8h-13z M1 4v6h11v-6zM1 4h1v1h-1zM3 4h1v1h-1zM5 4h1v1h-1zM7 4h1v1h-1zM9 4h1v1h-1zM11 4h1v1h-1zM2 5h1v1h-1zM4 5h1v1h-1zM6 5h1v1h-1zM8 5h1v1h-1zM10 5h1v1h-1zM1 6h1v1h-1zM3 6h1v1h-1zM5 6h1v1h-1zM7 6h1v1h-1zM9 6h1v1h-1zM11 6h1v1h-1zM2 7h1v1h-1zM4 7h1v1h-1zM6 7h1v1h-1zM8 7h1v1h-1zM10 7h1v1h-1zM1 8h1v1h-1zM3 8h1v1h-1zM5 8h1v1h-1zM7 8h1v1h-1zM9 8h1v1h-1zM11 8h1v1h-1zM2 9h1v1h-1zM4 9h1v1h-1zM6 9h1v1h-1zM8 9h1v1h-1zM10 9h1v1h-1zM6 11h1v1h-1z" fill="#ACA899"/></svg>
<svg style="left:853px;top:18px" width="14" height="14" shape-rendering="crispEdges"><g transform="translate(1,1)"><path d="M6 0h1v2h-1zM0 2h13v8h-13z M1 3v6h11v-6zM1 3h1v1h-1zM3 3h1v1h-1zM5 3h1v1h-1zM7 3h1v1h-1zM9 3h1v1h-1zM11 3h1v1h-1zM2 4h1v1h-1zM4 4h1v1h-1zM6 4h1v1h-1zM8 4h1v1h-1zM10 4h1v1h-1zM1 5h1v1h-1zM3 5h1v1h-1zM5 5h1v1h-1zM7 5h1v1h-1zM9 5h1v1h-1zM11 5h1v1h-1zM2 6h1v1h-1zM4 6h1v1h-1zM6 6h1v1h-1zM8 6h1v1h-1zM10 6h1v1h-1zM1 7h1v1h-1zM3 7h1v1h-1zM5 7h1v1h-1zM7 7h1v1h-1zM9 7h1v1h-1zM11 7h1v1h-1zM2 8h1v1h-1zM4 8h1v1h-1zM6 8h1v1h-1zM8 8h1v1h-1zM10 8h1v1h-1zM6 10h1v2h-1zM3 12h7v1h-7z" fill="#fff"/></g><path d="M6 0h1v2h-1zM0 2h13v8h-13z M1 3v6h11v-6zM1 3h1v1h-1zM3 3h1v1h-1zM5 3h1v1h-1zM7 3h1v1h-1zM9 3h1v1h-1zM11 3h1v1h-1zM2 4h1v1h-1zM4 4h1v1h-1zM6 4h1v1h-1zM8 4h1v1h-1zM10 4h1v1h-1zM1 5h1v1h-1zM3 5h1v1h-1zM5 5h1v1h-1zM7 5h1v1h-1zM9 5h1v1h-1zM11 5h1v1h-1zM2 6h1v1h-1zM4 6h1v1h-1zM6 6h1v1h-1zM8 6h1v1h-1zM10 6h1v1h-1zM1 7h1v1h-1zM3 7h1v1h-1zM5 7h1v1h-1zM7 7h1v1h-1zM9 7h1v1h-1zM11 7h1v1h-1zM2 8h1v1h-1zM4 8h1v1h-1zM6 8h1v1h-1zM8 8h1v1h-1zM10 8h1v1h-1zM6 10h1v2h-1zM3 12h7v1h-7z" fill="#ACA899"/></svg>
<svg style="left:876px;top:16px" width="14" height="14" shape-rendering="crispEdges"><g transform="translate(1,1)"><path d="M1 0h1v2h-1zM3 0h1v2h-1zM5 0h1v2h-1zM7 0h1v2h-1zM9 0h1v2h-1zM11 0h1v2h-1zM1 2h11v1h-11zM6 3h1v10h-1zM1 7h12v2h-12z" fill="#fff"/></g><path d="M1 0h1v2h-1zM3 0h1v2h-1zM5 0h1v2h-1zM7 0h1v2h-1zM9 0h1v2h-1zM11 0h1v2h-1zM1 2h11v1h-11zM6 3h1v10h-1zM1 7h12v2h-12z" fill="#ACA899"/></svg>
<svg style="left:897px;top:17px" width="17" height="15" shape-rendering="crispEdges"><g transform="translate(1,1)"><path d="M3 0h1v2h-1zM5 0h1v2h-1zM7 0h1v2h-1zM9 0h1v2h-1zM11 0h1v2h-1zM13 0h1v2h-1zM3 2h11v1h-11zM8 3h1v3h-1zM0 6h16v2h-16zM3 8h1v6h-1zM12 8h1v6h-1zM1 10h5v1h-5zM10 10h5v1h-5z" fill="#fff"/></g><path d="M3 0h1v2h-1zM5 0h1v2h-1zM7 0h1v2h-1zM9 0h1v2h-1zM11 0h1v2h-1zM13 0h1v2h-1zM3 2h11v1h-11zM8 3h1v3h-1zM0 6h16v2h-16zM3 8h1v6h-1zM12 8h1v6h-1zM1 10h5v1h-5zM10 10h5v1h-5z" fill="#ACA899"/></svg>
<svg style="left:920px;top:16px" width="17" height="16" shape-rendering="crispEdges"><g transform="translate(1,1)"><path d="M3 0h1v7h-1zM12 0h1v7h-1zM1 3h5v1h-5zM10 3h5v1h-5zM0 7h16v2h-16zM8 9h1v3h-1zM3 12h1v2h-1zM5 12h1v2h-1zM7 12h1v2h-1zM9 12h1v2h-1zM11 12h1v2h-1zM13 12h1v2h-1zM3 14h11v1h-11z" fill="#fff"/></g><path d="M3 0h1v7h-1zM12 0h1v7h-1zM1 3h5v1h-5zM10 3h5v1h-5zM0 7h16v2h-16zM8 9h1v3h-1zM3 12h1v2h-1zM5 12h1v2h-1zM7 12h1v2h-1zM9 12h1v2h-1zM11 12h1v2h-1zM13 12h1v2h-1zM3 14h11v1h-11z" fill="#ACA899"/></svg>
<svg style="left:943px;top:16px" width="18" height="16" shape-rendering="crispEdges"><g transform="translate(1,1)"><path d="M8 0h1v5h-1zM5 2h7v1h-7zM0 5h17v2h-17zM3 7h1v4h-1zM13 7h1v4h-1zM0 11h7v1h-7zM10 11h7v1h-7zM0 12h1v2h-1zM2 12h1v2h-1zM4 12h1v2h-1zM6 12h1v2h-1zM10 12h1v2h-1zM12 12h1v2h-1zM14 12h1v2h-1zM16 12h1v2h-1z" fill="#fff"/></g><path d="M8 0h1v5h-1zM5 2h7v1h-7zM0 5h17v2h-17zM3 7h1v4h-1zM13 7h1v4h-1zM0 11h7v1h-7zM10 11h7v1h-7zM0 12h1v2h-1zM2 12h1v2h-1zM4 12h1v2h-1zM6 12h1v2h-1zM10 12h1v2h-1zM12 12h1v2h-1zM14 12h1v2h-1zM16 12h1v2h-1z" fill="#ACA899"/></svg>
<svg style="left:965px;top:16px" width="18" height="16" shape-rendering="crispEdges"><g transform="translate(1,1)"><path d="M0 0h1v2h-1zM2 0h1v2h-1zM4 0h1v2h-1zM6 0h1v2h-1zM0 2h7v1h-7zM10 0h1v2h-1zM12 0h1v2h-1zM14 0h1v2h-1zM16 0h1v2h-1zM10 2h7v1h-7zM3 3h1v4h-1zM13 3h1v4h-1zM0 7h17v2h-17zM8 9h1v6h-1zM5 11h7v1h-7z" fill="#fff"/></g><path d="M0 0h1v2h-1zM2 0h1v2h-1zM4 0h1v2h-1zM6 0h1v2h-1zM0 2h7v1h-7zM10 0h1v2h-1zM12 0h1v2h-1zM14 0h1v2h-1zM16 0h1v2h-1zM10 2h7v1h-7zM3 3h1v4h-1zM13 3h1v4h-1zM0 7h17v2h-17zM8 9h1v6h-1zM5 11h7v1h-7z" fill="#ACA899"/></svg>
<svg style="left:1000px;top:18px" width="12" height="13" shape-rendering="crispEdges"><g transform="translate(1,1)"><path d="M0 0h1v6h-1zM0 5h11v1h-11zM10 5h1v7h-1z" fill="#fff"/></g><path d="M0 0h1v6h-1zM0 5h11v1h-11zM10 5h1v7h-1z" fill="#ACA899"/></svg>
<svg style="left:14px;top:46px" width="17" height="16" shape-rendering="crispEdges"><g transform="translate(1,1)"><path d="M3 2h12v1h-12zM6 4h9v2h-9zM6 7h7v2h-7zM3 10h12v1h-12zM3 12h9v1h-9zM5 0h1v1h-1zM5 2h1v1h-1zM5 4h1v1h-1zM5 6h1v1h-1zM5 8h1v1h-1zM5 10h1v1h-1zM5 12h1v1h-1zM5 14h1v1h-1zM0 6l3-3v2h3v2h-3v2z" fill="#fff"/></g><path d="M3 2h12v1h-12zM6 4h9v2h-9zM6 7h7v2h-7zM3 10h12v1h-12zM3 12h9v1h-9zM5 0h1v1h-1zM5 2h1v1h-1zM5 4h1v1h-1zM5 6h1v1h-1zM5 8h1v1h-1zM5 10h1v1h-1zM5 12h1v1h-1zM5 14h1v1h-1zM0 6l3-3v2h3v2h-3v2z" fill="#ACA899"/></svg>
<svg style="left:37px;top:46px" width="17" height="16" shape-rendering="crispEdges"><g transform="translate(1,1)"><path d="M3 2h12v1h-12zM6 4h9v2h-9zM6 7h7v2h-7zM3 10h12v1h-12zM3 12h9v1h-9zM5 0h1v1h-1zM5 2h1v1h-1zM5 4h1v1h-1zM5 6h1v1h-1zM5 8h1v1h-1zM5 10h1v1h-1zM5 12h1v1h-1zM5 14h1v1h-1zM0 5h2v-2l3 3l-3 3v-2h-2z" fill="#fff"/></g><path d="M3 2h12v1h-12zM6 4h9v2h-9zM6 7h7v2h-7zM3 10h12v1h-12zM3 12h9v1h-9zM5 0h1v1h-1zM5 2h1v1h-1zM5 4h1v1h-1zM5 6h1v1h-1zM5 8h1v1h-1zM5 10h1v1h-1zM5 12h1v1h-1zM5 14h1v1h-1zM0 5h2v-2l3 3l-3 3v-2h-2z" fill="#ACA899"/></svg>
<svg style="left:68px;top:46px" width="15" height="15" shape-rendering="crispEdges"><g transform="translate(1,1)"><path d="M0 1h2v1h-2zM2 1h12v1h-12zM4 4h10v1h-10zM4 7h10v1h-10zM4 10h10v1h-10zM2 13h12v1h-12z" fill="#fff"/></g><path d="M0 1h2v1h-2zM2 1h12v1h-12zM4 4h10v1h-10zM4 7h10v1h-10zM4 10h10v1h-10zM2 13h12v1h-12z" fill="#ACA899"/></svg>
<svg style="left:92px;top:46px" width="14" height="16" shape-rendering="crispEdges"><g transform="translate(1,1)"><path d="M0 2l1 0v1h1v-1h2v-1h5v1h1v3h-1v1h-5v-1h-2v-1h-1v1h-1zM2 8h11v1h-11zM4 11h9v1h-9zM1 14h12v1h-12z" fill="#fff"/></g><path d="M0 2l1 0v1h1v-1h2v-1h5v1h1v3h-1v1h-5v-1h-2v-1h-1v1h-1zM2 8h11v1h-11zM4 11h9v1h-9zM1 14h12v1h-12z" fill="#ACA899"/><path d="M4 3h5v2h-5z" fill="#ECE9D8"/></svg>
<svg style="left:122px;top:47px" width="17" height="15" shape-rendering="crispEdges"><g transform="translate(1,1)"><path d="M6 4l2-2l4 1l3 5l-5 5l-4-4z" fill="#fff"/><path d="M0.5 12.5l11-11" stroke="#fff" fill="none"/></g><path d="M6 4l2-2l4 1l3 5l-5 5l-4-4z" fill="#ACA899"/><path d="M0.5 12.5l11-11" stroke="#ACA899" fill="none"/></svg>
<svg style="left:145px;top:46px" width="18" height="16" shape-rendering="crispEdges"><g transform="translate(1,1)"><path d="M8 6l2-2l3 1l3 5l-5 5l-4-4zM1 2h1v3h-1zM1 4h3v1h-3zM2 1h2v1h-2zM4 0h3v1h-3zM7 1h1v1h-1z" fill="#fff"/><path d="M2.5 14.5l11-11 M7.5 1.5l4 4" stroke="#fff" fill="none"/></g><path d="M8 6l2-2l3 1l3 5l-5 5l-4-4zM1 2h1v3h-1zM1 4h3v1h-3zM2 1h2v1h-2zM4 0h3v1h-3zM7 1h1v1h-1z" fill="#ACA899"/><path d="M2.5 14.5l11-11 M7.5 1.5l4 4" stroke="#ACA899" fill="none"/></svg>
<svg style="left:168px;top:46px" width="18" height="16" shape-rendering="crispEdges"><g transform="translate(1,1)"><path d="M8 6l2-2l3 1l3 5l-5 5l-4-4zM8 2h1v3h-1zM6 4h3v1h-3zM1 1h1v2h-1zM2 0h4v1h-4zM6 1h2v1h-2z" fill="#fff"/><path d="M2.5 14.5l11-11" stroke="#fff" fill="none"/></g><path d="M8 6l2-2l3 1l3 5l-5 5l-4-4zM8 2h1v3h-1zM6 4h3v1h-3zM1 1h1v2h-1zM2 0h4v1h-4zM6 1h2v1h-2z" fill="#ACA899"/><path d="M2.5 14.5l11-11" stroke="#ACA899" fill="none"/></svg>
<svg style="left:191px;top:46px" width="18" height="16" shape-rendering="crispEdges"><g transform="translate(1,1)"><path d="M7 6l2-2l3 1l3 5l-5 5l-4-4z" fill="#fff"/><path d="M1.5 14.5l11-13 M2.5 1.5l6 7 M1 4.5h4" stroke="#fff" fill="none"/></g><path d="M7 6l2-2l3 1l3 5l-5 5l-4-4z" fill="#ACA899"/><path d="M1.5 14.5l11-13 M2.5 1.5l6 7 M1 4.5h4" stroke="#ACA899" fill="none"/></svg>
<div style="left:3px;top:-20px;width:3px;height:27px;border-left:1px solid #fff;border-top:1px solid #fff;border-right:1px solid #ACA899;border-bottom:1px solid #ACA899;"></div>
<div style="left:7px;top:-20px;width:3px;height:27px;border-left:1px solid #fff;border-top:1px solid #fff;border-right:1px solid #ACA899;border-bottom:1px solid #ACA899;"></div>
<div style="left:644px;top:-20px;width:3px;height:27px;border-left:1px solid #fff;border-top:1px solid #fff;border-right:1px solid #ACA899;border-bottom:1px solid #ACA899;"></div>
<div style="left:648px;top:-20px;width:3px;height:27px;border-left:1px solid #fff;border-top:1px solid #fff;border-right:1px solid #ACA899;border-bottom:1px solid #ACA899;"></div>
<div style="left:107px;top:0px;width:1px;height:6px;background:#ACA899;"></div>
<div style="left:108px;top:0px;width:1px;height:6px;background:#fff;"></div>
<div style="left:253px;top:0px;width:1px;height:6px;background:#ACA899;"></div>
<div style="left:254px;top:0px;width:1px;height:6px;background:#fff;"></div>
<div style="left:307px;top:0px;width:1px;height:6px;background:#ACA899;"></div>
<div style="left:308px;top:0px;width:1px;height:6px;background:#fff;"></div>
<div style="left:679px;top:0px;width:1px;height:6px;background:#ACA899;"></div>
<div style="left:680px;top:0px;width:1px;height:6px;background:#fff;"></div>
<div style="left:733px;top:0px;width:1px;height:6px;background:#ACA899;"></div>
<div style="left:734px;top:0px;width:1px;height:6px;background:#fff;"></div>
<div style="left:833px;top:0px;width:1px;height:6px;background:#ACA899;"></div>
<div style="left:834px;top:0px;width:1px;height:6px;background:#fff;"></div>
<div style="left:864px;top:0px;width:1px;height:6px;background:#ACA899;"></div>
<div style="left:865px;top:0px;width:1px;height:6px;background:#fff;"></div>
<div style="left:639px;top:0px;width:1px;height:8px;background:#ACA899;"></div>
<div style="left:640px;top:0px;width:1px;height:9px;background:#fff;"></div>
<div style="left:966px;top:0px;width:1px;height:8px;background:#ACA899;"></div>
<div style="left:967px;top:0px;width:1px;height:9px;background:#fff;"></div>
<div style="left:17px;top:0px;width:1px;height:2px;background:#ACA899;"></div>
<div style="left:41px;top:0px;width:1px;height:2px;background:#ACA899;"></div>
<div style="left:42px;top:0px;width:1px;height:2px;background:#fff;"></div>
<div style="left:50px;top:0px;width:2px;height:2px;background:#ACA899;"></div>
<div style="left:52px;top:0px;width:1px;height:2px;background:#fff;"></div>
<div style="left:73px;top:0px;width:1px;height:2px;background:#ACA899;"></div>
<div style="left:74px;top:0px;width:1px;height:2px;background:#fff;"></div>
<div style="left:96px;top:0px;width:1px;height:2px;background:#ACA899;"></div>
<div style="left:97px;top:0px;width:1px;height:2px;background:#fff;"></div>
<div style="left:184px;top:0px;width:1px;height:2px;background:#ACA899;"></div>
<div style="left:194px;top:0px;width:1px;height:2px;background:#ACA899;"></div>
<div style="left:232px;top:0px;width:3px;height:2px;background:#ACA899;"></div>
<div style="left:240px;top:0px;width:6px;height:2px;background:#ACA899;"></div>
<div style="left:658px;top:0px;width:4px;height:1px;background:#ACA899;"></div>
<div style="left:659px;top:1px;width:4px;height:1px;background:#fff;"></div>
<div style="left:664px;top:0px;width:6px;height:1px;background:#ACA899;"></div>
<div style="left:665px;top:1px;width:6px;height:1px;background:#fff;"></div>
<div style="left:692px;top:0px;width:4px;height:1px;background:#ACA899;"></div>
<div style="left:693px;top:1px;width:4px;height:1px;background:#fff;"></div>
<div style="left:710px;top:0px;width:15px;height:1px;background:#ACA899;"></div>
<div style="left:711px;top:1px;width:15px;height:1px;background:#fff;"></div>
<div style="left:770px;top:0px;width:8px;height:1px;background:#ACA899;"></div>
<div style="left:771px;top:1px;width:8px;height:1px;background:#fff;"></div>
<div style="left:790px;top:0px;width:10px;height:1px;background:#ACA899;"></div>
<div style="left:791px;top:1px;width:10px;height:1px;background:#fff;"></div>
<div style="left:815px;top:0px;width:10px;height:1px;background:#ACA899;"></div>
<div style="left:816px;top:1px;width:10px;height:1px;background:#fff;"></div>
<div style="left:845px;top:0px;width:12px;height:1px;background:#ACA899;"></div>
<div style="left:846px;top:1px;width:12px;height:1px;background:#fff;"></div>
<div style="left:875px;top:0px;width:10px;height:1px;background:#ACA899;"></div>
<div style="left:876px;top:1px;width:10px;height:1px;background:#fff;"></div>
<div style="left:895px;top:0px;width:12px;height:1px;background:#ACA899;"></div>
<div style="left:896px;top:1px;width:12px;height:1px;background:#fff;"></div>
<div style="left:918px;top:0px;width:12px;height:1px;background:#ACA899;"></div>
<div style="left:919px;top:1px;width:12px;height:1px;background:#fff;"></div>
<div style="left:940px;top:0px;width:14px;height:1px;background:#ACA899;"></div>
<div style="left:941px;top:1px;width:14px;height:1px;background:#fff;"></div>
<div style="left:111px;top:-10px;width:23px;height:14px;border:1px solid #fff;border-left-color:#ACA899;background-image:conic-gradient(#fff 25%,#ECE9D8 0 50%,#fff 0 75%,#ECE9D8 0);background-size:2px 2px;"></div>
<div style="left:257px;top:-10px;width:23px;height:14px;border:1px solid #fff;border-left-color:#ACA899;background-image:conic-gradient(#fff 25%,#ECE9D8 0 50%,#fff 0 75%,#ECE9D8 0);background-size:2px 2px;"></div>
<div style="left:311px;top:-10px;width:23px;height:14px;border:1px solid #fff;border-left-color:#ACA899;background-image:conic-gradient(#fff 25%,#ECE9D8 0 50%,#fff 0 75%,#ECE9D8 0);background-size:2px 2px;"></div>
<div style="left:138px;top:0px;width:9px;height:2px;background:#808000;"></div>
<div style="left:203px;top:-10px;width:23px;height:14px;border:1px solid #fff;border-left-color:#ACA899;background-image:conic-gradient(#fff 25%,#ECE9D8 0 50%,#fff 0 75%,#ECE9D8 0);background-size:2px 2px;"></div>
<div style="left:206px;top:0px;width:3px;height:2px;background:#008000;"></div>
<div style="left:209px;top:0px;width:12px;height:2px;background:#000;"></div>
<div style="left:211px;top:0px;width:8px;height:1px;background:#ff0;"></div>
<div style="left:262px;top:0px;width:2px;height:2px;background:#008080;"></div>
<div style="left:266px;top:0px;width:10px;height:1px;background:#000;"></div>
<div style="left:322px;top:0px;width:4px;height:2px;background:#808080;"></div>
<div style="left:176px;top:70px;width:1px;height:363px;background:#fff;"></div>
<div style="left:5px;top:74px;width:138px;height:3px;border-left:1px solid #fff;border-top:1px solid #fff;border-right:1px solid #ACA899;border-bottom:1px solid #ACA899;"></div>
<div style="left:5px;top:78px;width:138px;height:3px;border-left:1px solid #fff;border-top:1px solid #fff;border-right:1px solid #ACA899;border-bottom:1px solid #ACA899;"></div>
<div style="left:144px;top:71px;width:12px;height:12px;background:#ECE9D8;border-top:1px solid #fff;border-left:1px solid #fff;border-right:1px solid #716F64;border-bottom:1px solid #716F64;"><div style="left:0;top:0;right:0;bottom:0;border-right:1px solid #ACA899;border-bottom:1px solid #ACA899;"></div><svg style="left:2px;top:3px" width="6" height="4" shape-rendering="crispEdges"><path d="M1 1h5v1h-1v1h-1v1h-1v-1h-1v-1h-1z" fill="#fff"/><path d="M0 0h5v1h-1v1h-1v1h-1v-1h-1v-1h-1z" fill="#ACA899"/></svg></div>
<div style="left:158px;top:72px;width:11px;height:11px;background:#ECE9D8;border-top:1px solid #fff;border-left:1px solid #fff;border-right:1px solid #716F64;border-bottom:1px solid #716F64;"><div style="left:0;top:0;right:0;bottom:0;border-right:1px solid #ACA899;border-bottom:1px solid #ACA899;"></div><svg style="left:1px;top:2px" width="6" height="5" shape-rendering="crispEdges"><path d="M0 0h2v1h-2zM4 0h2v1h-2zM1 1h4v1h-4zM2 2h2v1h-2zM1 3h4v1h-4zM0 4h2v1h-2zM4 4h2v1h-2z" fill="#000"/></svg></div>
<div style="left:3px;top:85px;width:168px;height:347px;background:#ECE9D8;border-top:1px solid #ACA899;border-left:1px solid #ACA899;border-right:1px solid #fff;border-bottom:1px solid #fff;"><div style="left:0;top:0;right:0;bottom:0;border-top:1px solid #716F64;border-left:1px solid #716F64;border-right:1px solid #ECE9D8;border-bottom:1px solid #ECE9D8;"></div></div>
<div style="left:5px;top:87px;width:164px;height:311px;background:#fff;"></div>
<div style="left:6px;top:86px;width:163px;height:311px;overflow:hidden">
<div style="left:7px;top:9px;width:10px;height:1px;background-image:linear-gradient(90deg,#808080 50%,transparent 0);background-size:2px 1px;"></div>
<div style="left:3px;top:5px;width:9px;height:9px;border:1px solid #A5A290;background:#fff"><div style="left:1px;top:3px;width:5px;height:1px;background:#000"></div></div>
<svg style="left:18px;top:1px" width="16" height="15" shape-rendering="crispEdges"><path d="M2 0h6v1h-6zM2 1h1v1h-1zM7 1h1v1h-1zM2 2h6v1h-6zM4 3h2v1h-2zM2 4h11v1h-11zM2 5h1v1h-1zM7 5h2v1h-2zM12 5h1v1h-1zM0 6h4v1h-4zM6 6h4v1h-4zM11 6h4v1h-4zM0 7h1v1h-1zM3 7h1v1h-1zM6 7h1v1h-1zM9 7h1v1h-1zM11 7h1v1h-1zM14 7h1v1h-1zM0 8h4v1h-4zM6 8h4v1h-4zM11 8h4v1h-4zM7 9h2v1h-2zM4 10h7v1h-7zM4 11h1v1h-1zM10 11h1v1h-1zM3 12h4v1h-4zM9 12h4v1h-4zM3 13h1v1h-1zM6 13h1v1h-1zM9 13h1v1h-1zM12 13h1v1h-1zM3 14h4v1h-4zM9 14h4v1h-4z" fill="#000"/><path d="M3 1h4v1h-4zM1 7h2v1h-2zM7 7h2v1h-2zM12 7h2v1h-2zM4 13h2v1h-2zM10 13h2v1h-2z" fill="#808080"/></svg>
<div class="t" style="left:39px;top:3px">新工程</div>
<div style="left:26px;top:25px;width:10px;height:1px;background-image:linear-gradient(90deg,#808080 50%,transparent 0);background-size:2px 1px;"></div>
<div style="left:22px;top:21px;width:9px;height:9px;border:1px solid #A5A290;background:#fff"><div style="left:1px;top:3px;width:5px;height:1px;background:#000"></div></div>
<svg style="left:37px;top:17px" width="16" height="16" shape-rendering="crispEdges"><path d="M1 0h14v1h-14zM0 1h2v1h-2zM4 1h12v1h-12zM0 2h16v1h-16zM0 3h1v1h-1zM5 3h1v1h-1zM10 3h1v1h-1zM15 3h1v1h-1zM0 4h1v1h-1zM5 4h1v1h-1zM10 4h1v1h-1zM15 4h1v1h-1zM0 5h1v1h-1zM5 5h1v1h-1zM10 5h1v1h-1zM15 5h1v1h-1zM0 6h1v1h-1zM5 6h1v1h-1zM10 6h1v1h-1zM15 6h1v1h-1zM0 7h16v1h-16zM1 8h14v1h-14zM1 12h4v1h-4zM12 12h4v1h-4z" fill="#000"/><path d="M2 1h2v1h-2z" fill="#00ff00"/><path d="M1 3h1v1h-1zM3 3h2v1h-2zM6 3h1v1h-1zM8 3h2v1h-2zM11 3h1v1h-1zM13 3h2v1h-2zM1 4h1v1h-1zM3 4h2v1h-2zM6 4h1v1h-1zM8 4h2v1h-2zM11 4h1v1h-1zM13 4h2v1h-2zM1 5h1v1h-1zM3 5h2v1h-2zM6 5h1v1h-1zM8 5h2v1h-2zM11 5h1v1h-1zM13 5h2v1h-2zM1 6h1v1h-1zM3 6h2v1h-2zM6 6h1v1h-1zM8 6h2v1h-2zM11 6h1v1h-1zM13 6h2v1h-2z" fill="#808080"/><path d="M2 3h1v1h-1zM7 3h1v1h-1zM12 3h1v1h-1zM2 4h1v1h-1zM7 4h1v1h-1zM12 4h1v1h-1zM2 5h1v1h-1zM7 5h1v1h-1zM12 5h1v1h-1zM2 6h1v1h-1zM7 6h1v1h-1zM12 6h1v1h-1z" fill="#C0C0C0"/><path d="M6 10h1v1h-1zM11 10h1v1h-1zM7 11h1v1h-1zM10 11h1v1h-1zM8 12h2v1h-2zM8 13h2v1h-2zM7 14h1v1h-1zM10 14h1v1h-1zM6 15h1v1h-1zM11 15h1v1h-1z" fill="#c00000"/></svg>
<div class="t" style="left:58px;top:19px">新<span class="l">PLC1[C200HG] </span>离线</div>
<div style="left:45px;top:41px;width:10px;height:1px;background-image:linear-gradient(90deg,#808080 50%,transparent 0);background-size:2px 1px;"></div>
<svg style="left:58px;top:34px" width="13" height="14" shape-rendering="crispEdges"><path d="M1 0h9v1h-9zM0 1h1v1h-1zM10 1h1v1h-1zM0 2h1v1h-1zM11 2h1v1h-1zM0 3h1v1h-1zM0 4h1v1h-1zM10 4h1v1h-1zM1 5h9v1h-9z" fill="#808000"/><path d="M1 1h1v1h-1zM3 1h1v1h-1zM5 1h1v1h-1zM7 1h1v1h-1zM9 1h1v1h-1zM2 2h1v1h-1zM4 2h1v1h-1zM6 2h1v1h-1zM8 2h1v1h-1zM10 2h1v1h-1zM1 3h1v1h-1zM3 3h1v1h-1zM5 3h1v1h-1zM7 3h1v1h-1zM2 4h1v1h-1zM4 4h1v1h-1zM6 4h1v1h-1zM8 4h1v1h-1z" fill="#ffff00"/><path d="M2 1h1v1h-1zM4 1h1v1h-1zM6 1h1v1h-1zM8 1h1v1h-1zM1 2h1v1h-1zM3 2h1v1h-1zM5 2h1v1h-1zM7 2h1v1h-1zM2 3h1v1h-1zM4 3h1v1h-1zM6 3h1v1h-1zM8 3h1v1h-1zM1 4h1v1h-1zM3 4h1v1h-1zM5 4h1v1h-1zM7 4h1v1h-1zM9 4h1v1h-1z" fill="#fff"/><path d="M9 2h1v1h-1zM9 3h4v1h-4zM12 4h1v1h-1zM12 5h1v1h-1zM12 6h1v1h-1zM12 7h1v1h-1zM1 8h11v1h-11zM1 9h1v1h-1zM6 9h1v1h-1zM11 9h1v1h-1zM2 11h1v1h-1zM7 11h1v1h-1zM12 11h1v1h-1zM2 12h1v1h-1zM7 12h1v1h-1zM12 12h1v1h-1zM0 13h2v1h-2zM5 13h2v1h-2zM10 13h2v1h-2z" fill="#000"/><path d="M0 11h2v1h-2zM5 11h2v1h-2zM10 11h2v1h-2zM0 12h2v1h-2zM5 12h2v1h-2zM10 12h2v1h-2z" fill="#C0C0C0"/></svg>
<div class="t" style="left:77px;top:35px">符号</div>
<div style="left:45px;top:57px;width:10px;height:1px;background-image:linear-gradient(90deg,#808080 50%,transparent 0);background-size:2px 1px;"></div>
<svg style="left:57px;top:50px" width="14" height="14" shape-rendering="crispEdges"><path d="M6 0h8v1h-8zM6 1h8v1h-8zM1 2h5v1h-5zM9 2h5v1h-5zM0 3h2v1h-2zM5 3h2v1h-2zM9 3h3v1h-3zM13 3h1v1h-1zM0 4h7v1h-7zM9 4h2v1h-2zM13 4h1v1h-1zM0 5h1v1h-1zM2 5h5v1h-5zM9 5h1v1h-1zM11 5h1v1h-1zM0 6h1v1h-1zM2 6h5v1h-5zM9 6h1v1h-1zM11 6h1v1h-1zM0 7h1v1h-1zM2 7h5v1h-5zM9 7h1v1h-1zM11 7h1v1h-1zM0 8h1v1h-1zM2 8h5v1h-5zM9 8h1v1h-1zM11 8h1v1h-1zM0 9h1v1h-1zM2 9h5v1h-5zM9 9h1v1h-1zM11 9h1v1h-1zM1 10h5v1h-5zM9 10h1v1h-1zM11 10h1v1h-1zM2 11h3v1h-3zM9 11h1v1h-1zM11 11h1v1h-1zM2 12h3v1h-3zM9 12h1v1h-1zM11 12h1v1h-1zM10 13h1v1h-1z" fill="#000"/><path d="M2 3h3v1h-3zM10 5h1v1h-1zM10 6h1v1h-1zM10 7h1v1h-1zM10 8h1v1h-1zM10 9h1v1h-1zM10 10h1v1h-1zM10 11h1v1h-1zM10 12h1v1h-1z" fill="#ffff00"/><path d="M1 5h1v1h-1zM1 6h1v1h-1zM1 7h1v1h-1zM1 8h1v1h-1zM1 9h1v1h-1z" fill="#808080"/></svg>
<div class="t" style="left:77px;top:51px"><span class="l">IO </span>表</div>
<div style="left:45px;top:73px;width:10px;height:1px;background-image:linear-gradient(90deg,#808080 50%,transparent 0);background-size:2px 1px;"></div>
<svg style="left:58px;top:65px" width="13" height="14" shape-rendering="crispEdges"><path d="M1 0h1v1h-1zM3 0h1v1h-1zM5 0h1v1h-1zM7 0h1v1h-1zM9 0h1v1h-1zM11 0h1v1h-1zM0 1h12v1h-12zM0 2h1v1h-1zM11 2h1v1h-1zM0 3h1v1h-1zM11 3h1v1h-1zM0 4h1v1h-1zM11 4h1v1h-1zM0 5h1v1h-1zM11 5h1v1h-1zM0 6h1v1h-1zM6 6h3v1h-3zM11 6h1v1h-1zM0 7h1v1h-1zM5 7h1v1h-1zM9 7h1v1h-1zM11 7h1v1h-1zM0 8h1v1h-1zM5 8h1v1h-1zM7 8h1v1h-1zM9 8h1v1h-1zM11 8h1v1h-1zM0 9h1v1h-1zM5 9h1v1h-1zM9 9h1v1h-1zM11 9h1v1h-1zM0 10h1v1h-1zM6 10h3v1h-3zM11 10h1v1h-1zM0 11h1v1h-1zM11 11h1v1h-1zM0 12h12v1h-12z" fill="#000"/><path d="M2 0h1v1h-1zM4 0h1v1h-1zM6 0h1v1h-1zM8 0h1v1h-1zM10 0h1v1h-1zM1 2h10v1h-10zM1 3h10v1h-10zM1 4h1v1h-1zM4 4h1v1h-1zM7 4h1v1h-1zM10 4h1v1h-1zM1 5h10v1h-10zM1 6h1v1h-1zM4 6h2v1h-2zM9 6h2v1h-2zM1 7h4v1h-4zM10 7h1v1h-1zM1 8h1v1h-1zM4 8h1v1h-1zM10 8h1v1h-1zM1 9h4v1h-4zM10 9h1v1h-1zM1 10h1v1h-1zM3 10h3v1h-3zM9 10h2v1h-2zM1 11h10v1h-10z" fill="#fff"/><path d="M12 1h1v1h-1zM12 2h1v1h-1zM12 3h1v1h-1zM2 4h2v1h-2zM5 4h2v1h-2zM8 4h2v1h-2zM12 4h1v1h-1zM12 5h1v1h-1zM2 6h2v1h-2zM12 6h1v1h-1zM12 7h1v1h-1zM2 8h2v1h-2zM12 8h1v1h-1zM12 9h1v1h-1zM2 10h1v1h-1zM12 10h1v1h-1zM12 11h1v1h-1zM12 12h1v1h-1zM1 13h12v1h-12z" fill="#808080"/><path d="M6 7h3v1h-3zM6 8h1v1h-1zM8 8h1v1h-1zM6 9h3v1h-3z" fill="#ffff00"/></svg>
<div class="t" style="left:77px;top:67px">设置</div>
<div style="left:45px;top:89px;width:10px;height:1px;background-image:linear-gradient(90deg,#808080 50%,transparent 0);background-size:2px 1px;"></div>
<svg style="left:57px;top:82px" width="14" height="13" shape-rendering="crispEdges"><path d="M2 0h8v1h-8zM2 1h1v1h-1zM9 1h1v1h-1zM0 2h3v1h-3zM9 2h3v1h-3zM2 3h1v1h-1zM9 3h1v1h-1zM2 4h1v1h-1zM9 4h1v1h-1zM12 4h2v1h-2zM2 5h1v1h-1zM9 5h1v1h-1zM2 6h1v1h-1zM9 6h1v1h-1zM2 7h1v1h-1zM9 7h1v1h-1zM2 8h1v1h-1zM9 8h1v1h-1zM2 9h8v1h-8z" fill="#000"/><path d="M3 1h2v1h-2zM6 1h2v1h-2zM3 3h2v1h-2zM6 3h2v1h-2zM3 5h2v1h-2zM6 5h2v1h-2zM3 7h2v1h-2zM6 7h2v1h-2z" fill="#fff"/><path d="M5 1h1v1h-1zM8 1h1v1h-1zM3 2h6v1h-6zM5 3h1v1h-1zM8 3h1v1h-1zM10 3h2v1h-2zM3 4h6v1h-6zM10 4h2v1h-2zM5 5h1v1h-1zM8 5h1v1h-1zM10 5h2v1h-2zM3 6h6v1h-6zM10 6h2v1h-2zM5 7h1v1h-1zM8 7h1v1h-1zM10 7h2v1h-2zM3 8h6v1h-6zM10 8h2v1h-2zM10 9h2v1h-2zM5 10h7v1h-7zM5 11h7v1h-7zM5 12h7v1h-7z" fill="#808080"/></svg>
<div class="t" style="left:77px;top:83px">扩展指令</div>
<div style="left:45px;top:105px;width:10px;height:1px;background-image:linear-gradient(90deg,#808080 50%,transparent 0);background-size:2px 1px;"></div>
<svg style="left:56px;top:98px" width="16" height="12" shape-rendering="crispEdges"><path d="M11 0h2v1h-2zM13 1h1v1h-1zM13 2h1v1h-1zM14 3h1v1h-1zM14 4h1v1h-1zM14 5h1v1h-1zM0 6h1v1h-1zM12 6h3v1h-3zM1 7h2v1h-2zM9 7h5v1h-5zM2 8h3v1h-3zM6 8h5v1h-5zM12 8h1v1h-1zM3 9h5v1h-5zM9 9h1v1h-1zM11 9h1v1h-1zM4 10h1v1h-1zM6 10h1v1h-1zM8 10h1v1h-1zM5 11h1v1h-1zM7 11h1v1h-1z" fill="#000"/><path d="M9 1h4v1h-4zM7 2h6v1h-6zM5 3h9v1h-9zM3 4h11v1h-11zM1 5h13v1h-13zM1 6h11v1h-11zM3 7h6v1h-6zM5 8h1v1h-1z" fill="#808080"/></svg>
<div class="t" style="left:77px;top:99px">内存</div>
<div style="left:45px;top:121px;width:10px;height:1px;background-image:linear-gradient(90deg,#808080 50%,transparent 0);background-size:2px 1px;"></div>
<div style="left:41px;top:117px;width:9px;height:9px;border:1px solid #A5A290;background:#fff"><div style="left:1px;top:3px;width:5px;height:1px;background:#000"></div></div>
<svg style="left:56px;top:113px" width="17" height="15" shape-rendering="crispEdges"><path d="M2 0h1v1h-1zM4 0h1v1h-1zM6 0h1v1h-1zM8 0h1v1h-1zM1 1h1v1h-1zM3 1h1v1h-1zM5 1h1v1h-1zM7 1h1v1h-1zM9 1h1v1h-1zM11 1h1v1h-1zM2 2h1v1h-1zM4 2h1v1h-1zM6 2h1v1h-1zM10 2h1v1h-1zM2 3h1v1h-1zM4 3h1v1h-1zM6 3h1v1h-1zM8 3h1v1h-1zM10 3h1v1h-1zM12 3h1v1h-1zM3 4h1v1h-1zM7 4h1v1h-1zM9 4h1v1h-1zM11 4h1v1h-1zM2 5h1v1h-1zM4 5h1v1h-1zM6 5h1v1h-1zM8 5h1v1h-1zM10 5h1v1h-1zM12 5h1v1h-1zM4 6h1v1h-1zM6 6h1v1h-1zM8 6h1v1h-1zM10 6h1v1h-1zM12 6h1v1h-1zM3 7h1v1h-1zM5 7h1v1h-1zM7 7h1v1h-1zM9 7h1v1h-1zM13 7h1v1h-1zM4 8h1v1h-1zM6 8h1v1h-1zM8 8h1v1h-1zM10 8h1v1h-1zM12 8h1v1h-1zM4 9h1v1h-1zM6 9h1v1h-1zM10 9h1v1h-1zM12 9h1v1h-1zM14 9h1v1h-1zM5 10h1v1h-1zM7 10h1v1h-1zM9 10h1v1h-1zM11 10h1v1h-1zM13 10h1v1h-1zM6 11h1v1h-1zM8 11h1v1h-1zM10 11h1v1h-1zM12 11h1v1h-1zM14 11h1v1h-1zM6 12h1v1h-1zM8 12h1v1h-1zM10 12h1v1h-1zM12 12h1v1h-1zM5 13h1v1h-1zM7 13h1v1h-1zM9 13h1v1h-1zM11 13h1v1h-1zM13 13h1v1h-1zM15 13h1v1h-1zM8 14h1v1h-1zM12 14h1v1h-1zM14 14h1v1h-1z" fill="#ffff00"/><path d="M3 0h1v1h-1zM5 0h1v1h-1zM7 0h1v1h-1zM9 0h1v1h-1zM2 1h1v1h-1zM4 1h1v1h-1zM6 1h1v1h-1zM8 1h1v1h-1zM1 2h1v1h-1zM3 2h1v1h-1zM5 2h1v1h-1zM7 2h3v1h-3zM11 2h1v1h-1zM3 3h1v1h-1zM5 3h1v1h-1zM9 3h1v1h-1zM11 3h1v1h-1zM2 4h1v1h-1zM4 4h3v1h-3zM8 4h1v1h-1zM10 4h1v1h-1zM12 4h1v1h-1zM5 5h1v1h-1zM7 5h1v1h-1zM9 5h1v1h-1zM11 5h1v1h-1zM3 6h1v1h-1zM5 6h1v1h-1zM7 6h1v1h-1zM9 6h1v1h-1zM11 6h1v1h-1zM4 7h1v1h-1zM6 7h1v1h-1zM8 7h1v1h-1zM10 7h3v1h-3zM3 8h1v1h-1zM5 8h1v1h-1zM7 8h1v1h-1zM11 8h1v1h-1zM13 8h1v1h-1zM5 9h1v1h-1zM7 9h3v1h-3zM11 9h1v1h-1zM13 9h1v1h-1zM4 10h1v1h-1zM8 10h1v1h-1zM10 10h1v1h-1zM12 10h1v1h-1zM14 10h1v1h-1zM4 11h2v1h-2zM7 11h1v1h-1zM9 11h1v1h-1zM11 11h1v1h-1zM13 11h1v1h-1zM5 12h1v1h-1zM7 12h1v1h-1zM9 12h1v1h-1zM11 12h1v1h-1zM13 12h3v1h-3zM6 13h1v1h-1zM8 13h1v1h-1zM10 13h1v1h-1zM14 13h1v1h-1zM9 14h3v1h-3zM13 14h1v1h-1z" fill="#000"/><path d="M10 1h1v1h-1zM7 3h1v1h-1zM3 5h1v1h-1zM13 6h1v1h-1zM9 8h1v1h-1zM6 10h1v1h-1zM12 13h1v1h-1z" fill="#fff"/></svg>
<div class="t" style="left:77px;top:115px">程序</div>
<div style="left:64px;top:137px;width:10px;height:1px;background-image:linear-gradient(90deg,#808080 50%,transparent 0);background-size:2px 1px;"></div>
<div style="left:60px;top:133px;width:9px;height:9px;border:1px solid #A5A290;background:#fff"><div style="left:1px;top:3px;width:5px;height:1px;background:#000"></div></div>
<svg style="left:75px;top:129px" width="16" height="15" shape-rendering="crispEdges"><path d="M7 0h1v1h-1zM3 1h10v1h-10zM2 2h1v1h-1zM7 2h1v1h-1zM13 2h1v1h-1zM1 3h1v1h-1zM14 3h1v1h-1zM0 4h2v1h-2zM14 4h2v1h-2zM0 5h2v1h-2zM14 5h2v1h-2zM1 6h1v1h-1zM8 6h1v1h-1zM10 6h1v1h-1zM14 6h1v1h-1zM2 7h1v1h-1zM7 7h2v1h-2zM10 7h2v1h-2zM13 7h1v1h-1zM3 8h2v1h-2zM6 8h1v1h-1zM8 8h1v1h-1zM11 8h1v1h-1zM13 8h1v1h-1zM5 9h1v1h-1zM7 9h1v1h-1zM9 9h2v1h-2zM12 9h1v1h-1zM14 9h1v1h-1zM6 10h1v1h-1zM8 10h1v1h-1zM11 10h1v1h-1zM13 10h1v1h-1zM6 11h1v1h-1zM8 11h1v1h-1zM10 11h1v1h-1zM12 11h1v1h-1zM7 12h1v1h-1zM9 12h1v1h-1zM11 12h1v1h-1zM13 12h1v1h-1zM7 13h1v1h-1zM11 13h1v1h-1zM14 13h1v1h-1z" fill="#000"/><path d="M7 6h1v1h-1zM13 6h1v1h-1zM6 7h1v1h-1zM12 7h1v1h-1zM14 7h1v1h-1zM7 8h1v1h-1zM12 8h1v1h-1zM6 9h1v1h-1zM8 9h1v1h-1zM11 9h1v1h-1zM13 9h1v1h-1zM7 10h1v1h-1zM9 10h2v1h-2zM12 10h1v1h-1zM14 10h1v1h-1zM5 11h1v1h-1zM7 11h1v1h-1zM9 11h1v1h-1zM11 11h1v1h-1zM13 11h1v1h-1zM6 12h1v1h-1zM8 12h1v1h-1zM10 12h1v1h-1zM12 12h1v1h-1zM14 12h1v1h-1zM8 13h1v1h-1zM10 13h1v1h-1zM13 13h1v1h-1zM7 14h1v1h-1zM10 14h1v1h-1zM14 14h1v1h-1z" fill="#ffff00"/><path d="M9 6h1v1h-1zM9 7h1v1h-1zM9 8h2v1h-2z" fill="#808080"/></svg>
<div class="t" style="left:96px;top:131px">新程序<span class="l">1</span></div>
<div style="left:83px;top:153px;width:10px;height:1px;background-image:linear-gradient(90deg,#808080 50%,transparent 0);background-size:2px 1px;"></div>
<svg style="left:96px;top:146px" width="13" height="14" shape-rendering="crispEdges"><path d="M1 0h9v1h-9zM0 1h1v1h-1zM10 1h1v1h-1zM0 2h1v1h-1zM11 2h1v1h-1zM0 3h1v1h-1zM0 4h1v1h-1zM10 4h1v1h-1zM1 5h9v1h-9z" fill="#808000"/><path d="M1 1h1v1h-1zM3 1h1v1h-1zM5 1h1v1h-1zM7 1h1v1h-1zM9 1h1v1h-1zM2 2h1v1h-1zM4 2h1v1h-1zM6 2h1v1h-1zM8 2h1v1h-1zM10 2h1v1h-1zM1 3h1v1h-1zM3 3h1v1h-1zM5 3h1v1h-1zM7 3h1v1h-1zM2 4h1v1h-1zM4 4h1v1h-1zM6 4h1v1h-1zM8 4h1v1h-1z" fill="#ffff00"/><path d="M2 1h1v1h-1zM4 1h1v1h-1zM6 1h1v1h-1zM8 1h1v1h-1zM1 2h1v1h-1zM3 2h1v1h-1zM5 2h1v1h-1zM7 2h1v1h-1zM2 3h1v1h-1zM4 3h1v1h-1zM6 3h1v1h-1zM8 3h1v1h-1zM1 4h1v1h-1zM3 4h1v1h-1zM5 4h1v1h-1zM7 4h1v1h-1zM9 4h1v1h-1z" fill="#fff"/><path d="M9 2h1v1h-1zM9 3h4v1h-4zM12 4h1v1h-1zM12 5h1v1h-1zM12 6h1v1h-1zM12 7h1v1h-1zM1 8h11v1h-11zM1 9h1v1h-1zM6 9h1v1h-1zM11 9h1v1h-1zM2 11h1v1h-1zM7 11h1v1h-1zM12 11h1v1h-1zM2 12h1v1h-1zM7 12h1v1h-1zM12 12h1v1h-1zM0 13h2v1h-2zM5 13h2v1h-2zM10 13h2v1h-2z" fill="#000"/><path d="M0 11h2v1h-2zM5 11h2v1h-2zM10 11h2v1h-2zM0 12h2v1h-2zM5 12h2v1h-2zM10 12h2v1h-2z" fill="#C0C0C0"/></svg>
<div class="t" style="left:115px;top:147px">符号</div>
<div style="left:83px;top:169px;width:10px;height:1px;background-image:linear-gradient(90deg,#808080 50%,transparent 0);background-size:2px 1px;"></div>
<svg style="left:96px;top:162px" width="14" height="14" shape-rendering="crispEdges"><path d="M2 0h10v1h-10zM1 1h1v1h-1zM12 1h1v1h-1zM0 2h1v1h-1zM13 2h1v1h-1zM0 3h1v1h-1zM2 3h1v1h-1zM11 3h1v1h-1zM13 3h1v1h-1zM0 4h1v1h-1zM3 4h8v1h-8zM13 4h1v1h-1zM0 5h1v1h-1zM13 5h1v1h-1zM0 6h1v1h-1zM13 6h1v1h-1zM0 7h1v1h-1zM13 7h1v1h-1zM1 8h1v1h-1zM12 8h1v1h-1zM2 9h2v1h-2zM10 9h2v1h-2zM4 10h1v1h-1zM9 10h1v1h-1zM4 11h1v1h-1zM9 11h1v1h-1zM4 12h1v1h-1zM9 12h1v1h-1zM5 13h4v1h-4z" fill="#000"/><path d="M2 1h10v1h-10zM1 2h2v1h-2zM10 2h3v1h-3zM1 3h1v1h-1zM3 3h8v1h-8zM12 3h1v1h-1zM1 4h2v1h-2zM11 4h2v1h-2zM1 5h3v1h-3zM5 5h3v1h-3zM9 5h4v1h-4zM1 6h3v1h-3zM5 6h3v1h-3zM9 6h2v1h-2zM12 6h1v1h-1zM1 7h3v1h-3zM5 7h3v1h-3zM9 7h2v1h-2zM12 7h1v1h-1zM2 8h2v1h-2zM5 8h3v1h-3zM9 8h2v1h-2zM4 9h6v1h-6zM5 10h4v1h-4zM5 11h4v1h-4zM5 12h2v1h-2zM8 12h1v1h-1z" fill="#ffff00"/><path d="M3 2h7v1h-7zM11 6h1v1h-1zM11 7h1v1h-1zM11 8h1v1h-1zM7 12h1v1h-1z" fill="#808000"/><path d="M4 5h1v1h-1zM8 5h1v1h-1zM4 6h1v1h-1zM8 6h1v1h-1zM4 7h1v1h-1zM8 7h1v1h-1zM4 8h1v1h-1zM8 8h1v1h-1z" fill="#fff"/></svg>
<div style="left:113px;top:161px;width:22px;height:16px;background:#ECE9D8"></div>
<div class="t" style="left:115px;top:163px">段<span class="l">1</span></div>
<div style="left:26px;top:17px;width:1px;height:4px;background-image:linear-gradient(180deg,#808080 50%,transparent 0);background-size:1px 2px;"></div>
<div style="left:45px;top:33px;width:1px;height:84px;background-image:linear-gradient(180deg,#808080 50%,transparent 0);background-size:1px 2px;"></div>
<div style="left:64px;top:129px;width:1px;height:4px;background-image:linear-gradient(180deg,#808080 50%,transparent 0);background-size:1px 2px;"></div>
<div style="left:83px;top:145px;width:1px;height:25px;background-image:linear-gradient(180deg,#808080 50%,transparent 0);background-size:1px 2px;"></div>
</div>
<div style="left:5px;top:397px;width:164px;height:17px;background:#F6F5F0;"></div>
<div style="left:5px;top:397px;width:17px;height:17px;border:1px solid #fff;border-radius:3px;background:linear-gradient(135deg,#CBDAFD 20%,#B7CAF9 90%);box-shadow:inset 0 0 0 1px #D6E1FD,inset -1px -1px 0 1px #AEC2F4;"><svg style="left:-1px;top:-1px" width="17" height="17"><path d="M10 4.5L6.5 8l3.5 3.5" stroke="#4D6185" stroke-width="2.4" fill="none"/></svg></div>
<div style="left:152px;top:397px;width:17px;height:17px;border:1px solid #fff;border-radius:3px;background:linear-gradient(135deg,#CBDAFD 20%,#B7CAF9 90%);box-shadow:inset 0 0 0 1px #D6E1FD,inset -1px -1px 0 1px #AEC2F4;"><svg style="left:-1px;top:-1px" width="17" height="17"><path d="M7 4.5L10.5 8l-3.5 3.5" stroke="#4D6185" stroke-width="2.4" fill="none"/></svg></div>
<div style="left:22px;top:397px;width:122px;height:17px;border:1px solid #fff;border-radius:3px;background:linear-gradient(180deg,#C9D8FD,#B9CBF9);box-shadow:inset 0 0 0 1px #D6E1FD,inset -1px -1px 0 1px #AEC2F4;"><div style="left:56px;top:4px;width:8px;height:7px;background-image:linear-gradient(90deg,#EEF4FE 50%,#8CB0F8 0);background-size:2px 1px"></div></div>
<div style="left:46px;top:414px;width:124px;height:1px;background:#000;"></div>
<svg style="left:4px;top:414px" width="48" height="18"><path d="M1 0.5 L7.5 16.5 H38.5 L45 0.5" fill="#fff" stroke="#000" stroke-width="1"/><path d="M2 0 H44" stroke="#fff" stroke-width="2"/></svg>
<div class="t" style="left:15px;top:417px;color:#000;">工程</div>
<div style="left:181px;top:69px;width:1px;height:344px;background:#000;"></div>
<div style="left:181px;top:69px;width:841px;height:1px;background:#000;"></div>
<div style="left:182px;top:70px;width:823px;height:326px;background:#fff;overflow:hidden">
<div style="left:0px;top:0px;width:49px;height:326px;background:#ECE9D8;"></div>
<div style="left:49px;top:0px;width:4px;height:297px;background:#f00;"></div>
<div style="left:49px;top:297px;width:4px;height:2px;background:#ECE9D8;"></div>
<div style="left:53px;top:0px;width:1px;height:326px;background:#008000;"></div>
<div style="left:49px;top:299px;width:1px;height:27px;background:#ACA899;"></div>
<div style="left:50px;top:299px;width:3px;height:27px;background:#ECE9D8;"></div>
<div style="left:0px;top:298px;width:53px;height:1px;background:#fff;"></div>
<div style="left:54px;top:299px;width:770px;height:1px;background:#D4D4D4;"></div>
<div style="left:54px;top:0px;width:2px;height:1px;background:#D8D8D8;"></div>
<div style="left:54px;top:30px;width:2px;height:1px;background:#D8D8D8;"></div>
<div style="left:54px;top:60px;width:2px;height:1px;background:#D8D8D8;"></div>
<div style="left:54px;top:90px;width:2px;height:1px;background:#D8D8D8;"></div>
<div style="left:54px;top:120px;width:2px;height:1px;background:#D8D8D8;"></div>
<div style="left:54px;top:150px;width:2px;height:1px;background:#D8D8D8;"></div>
<div style="left:54px;top:180px;width:2px;height:1px;background:#D8D8D8;"></div>
<div style="left:54px;top:210px;width:2px;height:1px;background:#D8D8D8;"></div>
<div style="left:54px;top:240px;width:2px;height:1px;background:#D8D8D8;"></div>
<div style="left:54px;top:270px;width:2px;height:1px;background:#D8D8D8;"></div>
<div style="left:54px;top:300px;width:2px;height:1px;background:#D8D8D8;"></div>
<div style="left:155px;top:0px;width:3px;height:1px;background:#D8D8D8;"></div>
<div style="left:156px;top:-1px;width:1px;height:3px;background:#D8D8D8;"></div>
<div style="left:155px;top:30px;width:3px;height:1px;background:#D8D8D8;"></div>
<div style="left:156px;top:29px;width:1px;height:3px;background:#D8D8D8;"></div>
<div style="left:155px;top:60px;width:3px;height:1px;background:#D8D8D8;"></div>
<div style="left:156px;top:59px;width:1px;height:3px;background:#D8D8D8;"></div>
<div style="left:155px;top:90px;width:3px;height:1px;background:#D8D8D8;"></div>
<div style="left:156px;top:89px;width:1px;height:3px;background:#D8D8D8;"></div>
<div style="left:155px;top:120px;width:3px;height:1px;background:#D8D8D8;"></div>
<div style="left:156px;top:119px;width:1px;height:3px;background:#D8D8D8;"></div>
<div style="left:155px;top:150px;width:3px;height:1px;background:#D8D8D8;"></div>
<div style="left:156px;top:149px;width:1px;height:3px;background:#D8D8D8;"></div>
<div style="left:155px;top:180px;width:3px;height:1px;background:#D8D8D8;"></div>
<div style="left:156px;top:179px;width:1px;height:3px;background:#D8D8D8;"></div>
<div style="left:155px;top:210px;width:3px;height:1px;background:#D8D8D8;"></div>
<div style="left:156px;top:209px;width:1px;height:3px;background:#D8D8D8;"></div>
<div style="left:155px;top:240px;width:3px;height:1px;background:#D8D8D8;"></div>
<div style="left:156px;top:239px;width:1px;height:3px;background:#D8D8D8;"></div>
<div style="left:155px;top:270px;width:3px;height:1px;background:#D8D8D8;"></div>
<div style="left:156px;top:269px;width:1px;height:3px;background:#D8D8D8;"></div>
<div style="left:155px;top:300px;width:3px;height:1px;background:#D8D8D8;"></div>
<div style="left:156px;top:299px;width:1px;height:3px;background:#D8D8D8;"></div>
<div style="left:257px;top:0px;width:3px;height:1px;background:#D8D8D8;"></div>
<div style="left:258px;top:-1px;width:1px;height:3px;background:#D8D8D8;"></div>
<div style="left:257px;top:30px;width:3px;height:1px;background:#D8D8D8;"></div>
<div style="left:258px;top:29px;width:1px;height:3px;background:#D8D8D8;"></div>
<div style="left:257px;top:60px;width:3px;height:1px;background:#D8D8D8;"></div>
<div style="left:258px;top:59px;width:1px;height:3px;background:#D8D8D8;"></div>
<div style="left:257px;top:90px;width:3px;height:1px;background:#D8D8D8;"></div>
<div style="left:258px;top:89px;width:1px;height:3px;background:#D8D8D8;"></div>
<div style="left:257px;top:120px;width:3px;height:1px;background:#D8D8D8;"></div>
<div style="left:258px;top:119px;width:1px;height:3px;background:#D8D8D8;"></div>
<div style="left:257px;top:150px;width:3px;height:1px;background:#D8D8D8;"></div>
<div style="left:258px;top:149px;width:1px;height:3px;background:#D8D8D8;"></div>
<div style="left:257px;top:180px;width:3px;height:1px;background:#D8D8D8;"></div>
<div style="left:258px;top:179px;width:1px;height:3px;background:#D8D8D8;"></div>
<div style="left:257px;top:210px;width:3px;height:1px;background:#D8D8D8;"></div>
<div style="left:258px;top:209px;width:1px;height:3px;background:#D8D8D8;"></div>
<div style="left:257px;top:240px;width:3px;height:1px;background:#D8D8D8;"></div>
<div style="left:258px;top:239px;width:1px;height:3px;background:#D8D8D8;"></div>
<div style="left:257px;top:270px;width:3px;height:1px;background:#D8D8D8;"></div>
<div style="left:258px;top:269px;width:1px;height:3px;background:#D8D8D8;"></div>
<div style="left:257px;top:300px;width:3px;height:1px;background:#D8D8D8;"></div>
<div style="left:258px;top:299px;width:1px;height:3px;background:#D8D8D8;"></div>
<div style="left:359px;top:0px;width:3px;height:1px;background:#D8D8D8;"></div>
<div style="left:360px;top:-1px;width:1px;height:3px;background:#D8D8D8;"></div>
<div style="left:359px;top:30px;width:3px;height:1px;background:#D8D8D8;"></div>
<div style="left:360px;top:29px;width:1px;height:3px;background:#D8D8D8;"></div>
<div style="left:359px;top:60px;width:3px;height:1px;background:#D8D8D8;"></div>
<div style="left:360px;top:59px;width:1px;height:3px;background:#D8D8D8;"></div>
<div style="left:359px;top:90px;width:3px;height:1px;background:#D8D8D8;"></div>
<div style="left:360px;top:89px;width:1px;height:3px;background:#D8D8D8;"></div>
<div style="left:359px;top:120px;width:3px;height:1px;background:#D8D8D8;"></div>
<div style="left:360px;top:119px;width:1px;height:3px;background:#D8D8D8;"></div>
<div style="left:359px;top:150px;width:3px;height:1px;background:#D8D8D8;"></div>
<div style="left:360px;top:149px;width:1px;height:3px;background:#D8D8D8;"></div>
<div style="left:359px;top:180px;width:3px;height:1px;background:#D8D8D8;"></div>
<div style="left:360px;top:179px;width:1px;height:3px;background:#D8D8D8;"></div>
<div style="left:359px;top:210px;width:3px;height:1px;background:#D8D8D8;"></div>
<div style="left:360px;top:209px;width:1px;height:3px;background:#D8D8D8;"></div>
<div style="left:359px;top:240px;width:3px;height:1px;background:#D8D8D8;"></div>
<div style="left:360px;top:239px;width:1px;height:3px;background:#D8D8D8;"></div>
<div style="left:359px;top:270px;width:3px;height:1px;background:#D8D8D8;"></div>
<div style="left:360px;top:269px;width:1px;height:3px;background:#D8D8D8;"></div>
<div style="left:359px;top:300px;width:3px;height:1px;background:#D8D8D8;"></div>
<div style="left:360px;top:299px;width:1px;height:3px;background:#D8D8D8;"></div>
<div style="left:461px;top:0px;width:3px;height:1px;background:#D8D8D8;"></div>
<div style="left:462px;top:-1px;width:1px;height:3px;background:#D8D8D8;"></div>
<div style="left:461px;top:30px;width:3px;height:1px;background:#D8D8D8;"></div>
<div style="left:462px;top:29px;width:1px;height:3px;background:#D8D8D8;"></div>
<div style="left:461px;top:60px;width:3px;height:1px;background:#D8D8D8;"></div>
<div style="left:462px;top:59px;width:1px;height:3px;background:#D8D8D8;"></div>
<div style="left:461px;top:90px;width:3px;height:1px;background:#D8D8D8;"></div>
<div style="left:462px;top:89px;width:1px;height:3px;background:#D8D8D8;"></div>
<div style="left:461px;top:120px;width:3px;height:1px;background:#D8D8D8;"></div>
<div style="left:462px;top:119px;width:1px;height:3px;background:#D8D8D8;"></div>
<div style="left:461px;top:150px;width:3px;height:1px;background:#D8D8D8;"></div>
<div style="left:462px;top:149px;width:1px;height:3px;background:#D8D8D8;"></div>
<div style="left:461px;top:180px;width:3px;height:1px;background:#D8D8D8;"></div>
<div style="left:462px;top:179px;width:1px;height:3px;background:#D8D8D8;"></div>
<div style="left:461px;top:210px;width:3px;height:1px;background:#D8D8D8;"></div>
<div style="left:462px;top:209px;width:1px;height:3px;background:#D8D8D8;"></div>
<div style="left:461px;top:240px;width:3px;height:1px;background:#D8D8D8;"></div>
<div style="left:462px;top:239px;width:1px;height:3px;background:#D8D8D8;"></div>
<div style="left:461px;top:270px;width:3px;height:1px;background:#D8D8D8;"></div>
<div style="left:462px;top:269px;width:1px;height:3px;background:#D8D8D8;"></div>
<div style="left:461px;top:300px;width:3px;height:1px;background:#D8D8D8;"></div>
<div style="left:462px;top:299px;width:1px;height:3px;background:#D8D8D8;"></div>
<div style="left:563px;top:0px;width:3px;height:1px;background:#D8D8D8;"></div>
<div style="left:564px;top:-1px;width:1px;height:3px;background:#D8D8D8;"></div>
<div style="left:563px;top:30px;width:3px;height:1px;background:#D8D8D8;"></div>
<div style="left:564px;top:29px;width:1px;height:3px;background:#D8D8D8;"></div>
<div style="left:563px;top:60px;width:3px;height:1px;background:#D8D8D8;"></div>
<div style="left:564px;top:59px;width:1px;height:3px;background:#D8D8D8;"></div>
<div style="left:563px;top:90px;width:3px;height:1px;background:#D8D8D8;"></div>
<div style="left:564px;top:89px;width:1px;height:3px;background:#D8D8D8;"></div>
<div style="left:563px;top:120px;width:3px;height:1px;background:#D8D8D8;"></div>
<div style="left:564px;top:119px;width:1px;height:3px;background:#D8D8D8;"></div>
<div style="left:563px;top:150px;width:3px;height:1px;background:#D8D8D8;"></div>
<div style="left:564px;top:149px;width:1px;height:3px;background:#D8D8D8;"></div>
<div style="left:563px;top:180px;width:3px;height:1px;background:#D8D8D8;"></div>
<div style="left:564px;top:179px;width:1px;height:3px;background:#D8D8D8;"></div>
<div style="left:563px;top:210px;width:3px;height:1px;background:#D8D8D8;"></div>
<div style="left:564px;top:209px;width:1px;height:3px;background:#D8D8D8;"></div>
<div style="left:563px;top:240px;width:3px;height:1px;background:#D8D8D8;"></div>
<div style="left:564px;top:239px;width:1px;height:3px;background:#D8D8D8;"></div>
<div style="left:563px;top:270px;width:3px;height:1px;background:#D8D8D8;"></div>
<div style="left:564px;top:269px;width:1px;height:3px;background:#D8D8D8;"></div>
<div style="left:563px;top:300px;width:3px;height:1px;background:#D8D8D8;"></div>
<div style="left:564px;top:299px;width:1px;height:3px;background:#D8D8D8;"></div>
<div style="left:665px;top:0px;width:3px;height:1px;background:#D8D8D8;"></div>
<div style="left:666px;top:-1px;width:1px;height:3px;background:#D8D8D8;"></div>
<div style="left:665px;top:30px;width:3px;height:1px;background:#D8D8D8;"></div>
<div style="left:666px;top:29px;width:1px;height:3px;background:#D8D8D8;"></div>
<div style="left:665px;top:60px;width:3px;height:1px;background:#D8D8D8;"></div>
<div style="left:666px;top:59px;width:1px;height:3px;background:#D8D8D8;"></div>
<div style="left:665px;top:90px;width:3px;height:1px;background:#D8D8D8;"></div>
<div style="left:666px;top:89px;width:1px;height:3px;background:#D8D8D8;"></div>
<div style="left:665px;top:120px;width:3px;height:1px;background:#D8D8D8;"></div>
<div style="left:666px;top:119px;width:1px;height:3px;background:#D8D8D8;"></div>
<div style="left:665px;top:150px;width:3px;height:1px;background:#D8D8D8;"></div>
<div style="left:666px;top:149px;width:1px;height:3px;background:#D8D8D8;"></div>
<div style="left:665px;top:180px;width:3px;height:1px;background:#D8D8D8;"></div>
<div style="left:666px;top:179px;width:1px;height:3px;background:#D8D8D8;"></div>
<div style="left:665px;top:210px;width:3px;height:1px;background:#D8D8D8;"></div>
<div style="left:666px;top:209px;width:1px;height:3px;background:#D8D8D8;"></div>
<div style="left:665px;top:240px;width:3px;height:1px;background:#D8D8D8;"></div>
<div style="left:666px;top:239px;width:1px;height:3px;background:#D8D8D8;"></div>
<div style="left:665px;top:270px;width:3px;height:1px;background:#D8D8D8;"></div>
<div style="left:666px;top:269px;width:1px;height:3px;background:#D8D8D8;"></div>
<div style="left:665px;top:300px;width:3px;height:1px;background:#D8D8D8;"></div>
<div style="left:666px;top:299px;width:1px;height:3px;background:#D8D8D8;"></div>
<div style="left:767px;top:0px;width:3px;height:1px;background:#D8D8D8;"></div>
<div style="left:768px;top:-1px;width:1px;height:3px;background:#D8D8D8;"></div>
<div style="left:767px;top:30px;width:3px;height:1px;background:#D8D8D8;"></div>
<div style="left:768px;top:29px;width:1px;height:3px;background:#D8D8D8;"></div>
<div style="left:767px;top:60px;width:3px;height:1px;background:#D8D8D8;"></div>
<div style="left:768px;top:59px;width:1px;height:3px;background:#D8D8D8;"></div>
<div style="left:767px;top:90px;width:3px;height:1px;background:#D8D8D8;"></div>
<div style="left:768px;top:89px;width:1px;height:3px;background:#D8D8D8;"></div>
<div style="left:767px;top:120px;width:3px;height:1px;background:#D8D8D8;"></div>
<div style="left:768px;top:119px;width:1px;height:3px;background:#D8D8D8;"></div>
<div style="left:767px;top:150px;width:3px;height:1px;background:#D8D8D8;"></div>
<div style="left:768px;top:149px;width:1px;height:3px;background:#D8D8D8;"></div>
<div style="left:767px;top:180px;width:3px;height:1px;background:#D8D8D8;"></div>
<div style="left:768px;top:179px;width:1px;height:3px;background:#D8D8D8;"></div>
<div style="left:767px;top:210px;width:3px;height:1px;background:#D8D8D8;"></div>
<div style="left:768px;top:209px;width:1px;height:3px;background:#D8D8D8;"></div>
<div style="left:767px;top:240px;width:3px;height:1px;background:#D8D8D8;"></div>
<div style="left:768px;top:239px;width:1px;height:3px;background:#D8D8D8;"></div>
<div style="left:767px;top:270px;width:3px;height:1px;background:#D8D8D8;"></div>
<div style="left:768px;top:269px;width:1px;height:3px;background:#D8D8D8;"></div>
<div style="left:767px;top:300px;width:3px;height:1px;background:#D8D8D8;"></div>
<div style="left:768px;top:299px;width:1px;height:3px;background:#D8D8D8;"></div>
<div style="left:767px;top:0px;width:1px;height:326px;background:#008000;"></div>
<div style="left:3px;top:0px;font:11px/12px 'Liberation Sans',sans-serif;letter-spacing:-0.3px;white-space:pre">591</div>
<div style="left:16px;top:12px;font:11px/12px 'Liberation Sans',sans-serif;letter-spacing:-0.3px;white-space:pre">3788</div>
<div style="left:3px;top:300px;font:11px/12px 'Liberation Sans',sans-serif;letter-spacing:-0.3px;white-space:pre">592</div>
<div style="left:16px;top:312px;font:11px/12px 'Liberation Sans',sans-serif;letter-spacing:-0.3px;white-space:pre">3794</div>
<div style="left:54px;top:19px;width:45px;height:1px;background:#000;"></div>
<div style="left:112px;top:19px;width:89px;height:1px;background:#000;"></div>
<div style="left:214px;top:19px;width:497px;height:1px;background:#000;"></div>
<div style="left:724px;top:19px;width:44px;height:1px;background:#000;"></div>
<div style="left:99px;top:13px;width:1px;height:13px;background:#000;"></div>
<div style="left:111px;top:13px;width:1px;height:13px;background:#000;"></div>
<svg style="left:99px;top:13px" width="13" height="13"><path d="M1.5 12.5L11.5 0.5" stroke="#000" stroke-width="1"/></svg>
<div style="left:201px;top:13px;width:1px;height:13px;background:#000;"></div>
<div style="left:213px;top:13px;width:1px;height:13px;background:#000;"></div>
<svg style="left:201px;top:13px" width="13" height="13"><path d="M1.5 12.5L11.5 0.5" stroke="#000" stroke-width="1"/></svg>
<div class="t" style="left:86px;top:0px;width:36px;color:#000"><span class="l">201.05</span></div>
<div class="t" style="left:188px;top:0px;width:36px;color:#000"><span class="l">201.06</span></div>
<div class="t" style="left:698px;top:0px;width:36px;color:#000"><span class="l">201.07</span></div>
<svg style="left:711px;top:13px" width="13" height="13"><circle cx="6.5" cy="6.5" r="6" fill="#fff" stroke="#000" stroke-width="1"/></svg>
<div style="left:767px;top:15px;width:1px;height:8px;background:#000;"></div>
<div style="left:258px;top:19px;width:1px;height:211px;background:#000;"></div>
<div style="left:259px;top:49px;width:407px;height:1px;background:#000;"></div>
<div style="left:666px;top:49px;width:4px;height:1px;background:#f00;"></div>
<svg style="left:663px;top:57px" width="109" height="37" shape-rendering="crispEdges"><defs><pattern id="hz" width="4" height="4" patternUnits="userSpaceOnUse"><path d="M3 0h1v1h-1zM2 1h1v1h-1zM1 2h1v1h-1zM0 3h1v1h-1z" fill="#000"/></pattern></defs><rect width="109" height="37" fill="url(#hz)"/></svg>
<div style="left:667px;top:61px;width:100px;height:28px;background:#0ff;"></div>
<div style="left:670px;top:42px;width:94px;height:44px;border:1px solid #f00"></div>
<div style="left:670px;top:60px;width:94px;height:1px;background:#f00;"></div>
<div style="left:764px;top:49px;width:4px;height:1px;background:#f00;"></div>
<div class="t" style="left:695px;top:45px;width:42px;color:#f00"><span class="l">INT(89)</span></div>
<div class="t" style="left:701px;top:61px;width:30px;color:#000"><span class="l">DM326</span></div>
<div style="left:259px;top:109px;width:411px;height:1px;background:#000;"></div>
<div style="left:670px;top:102px;width:94px;height:104px;border:1px solid #000"></div>
<div style="left:670px;top:120px;width:94px;height:1px;background:#000;"></div>
<div style="left:764px;top:109px;width:4px;height:1px;background:#000;"></div>
<div style="left:767px;top:105px;width:1px;height:8px;background:#000;"></div>
<div class="t" style="left:695px;top:105px;width:42px;color:#000"><span class="l">APR(69)</span></div>
<div class="t" style="left:701px;top:121px;width:30px;color:#000"><span class="l">DM326</span></div>
<div class="t" style="left:701px;top:151px;width:30px;color:#000"><span class="l">DM322</span></div>
<div style="left:702px;top:150px;width:30px;height:1px;background:#000;"></div>
<div class="t" style="left:701px;top:181px;width:30px;color:#000"><span class="l">DM328</span></div>
<div style="left:702px;top:180px;width:30px;height:1px;background:#000;"></div>
<div style="left:259px;top:229px;width:411px;height:1px;background:#000;"></div>
<div style="left:670px;top:222px;width:94px;height:74px;border:1px solid #000"></div>
<div style="left:670px;top:240px;width:94px;height:1px;background:#000;"></div>
<div style="left:764px;top:229px;width:4px;height:1px;background:#000;"></div>
<div style="left:767px;top:225px;width:1px;height:8px;background:#000;"></div>
<div class="t" style="left:692px;top:225px;width:48px;color:#000"><span class="l">BCDL(59)</span></div>
<div class="t" style="left:701px;top:241px;width:30px;color:#000"><span class="l">DM328</span></div>
<div class="t" style="left:698px;top:271px;width:36px;color:#000"><span class="l">DM4058</span></div>
<div style="left:702px;top:270px;width:30px;height:1px;background:#000;"></div>
<div class="t" style="left:778px;top:45px">中断控制</div>
<div class="t" style="left:778px;top:61px">控制代码</div>
<div class="t" style="left:778px;top:105px">算术处理</div>
<div class="t" style="left:778px;top:121px">控制字</div>
<div class="t" style="left:778px;top:151px">源数据</div>
<div class="t" style="left:778px;top:181px">结果字</div>
<div class="t" style="left:778px;top:225px">双二进制</div>
<div class="t" style="left:778px;top:241px">第一个源字</div>
<div class="t" style="left:778px;top:271px">第一个结果字</div>
<div class="t" style="left:778px;top:315px">上升沿微分</div>
<div style="left:54px;top:319px;width:45px;height:1px;background:#000;"></div>
<div style="left:112px;top:319px;width:558px;height:1px;background:#000;"></div>
<div style="left:99px;top:313px;width:1px;height:13px;background:#000;"></div>
<div style="left:111px;top:313px;width:1px;height:13px;background:#000;"></div>
<div class="t" style="left:86px;top:300px;width:36px;color:#000"><span class="l">342.03</span></div>
<div style="left:670px;top:312px;width:94px;height:30px;border:1px solid #000"></div>
<div style="left:764px;top:319px;width:4px;height:1px;background:#000;"></div>
<div style="left:767px;top:315px;width:1px;height:8px;background:#000;"></div>
<div class="t" style="left:692px;top:315px;width:48px;color:#000"><span class="l">DIFU(13)</span></div>
</div>
<div style="left:1005px;top:70px;width:17px;height:326px;background-image:conic-gradient(#fff 25%,#ECE9D8 0 50%,#fff 0 75%,#ECE9D8 0);background-size:2px 2px;"></div>
<div style="left:1005px;top:70px;width:17px;height:7px;background:#ECE9D8;border-left:1px solid #fff;border-top:1px solid #fff;border-right:1px solid #000;border-bottom:1px solid #000;"></div>
<div style="left:1005px;top:77px;width:17px;height:17px;background:#ECE9D8;border-top:1px solid #fff;border-left:1px solid #fff;border-right:1px solid #716F64;border-bottom:1px solid #716F64;"><div style="left:0;top:0;right:0;bottom:0;border-right:1px solid #ACA899;border-bottom:1px solid #ACA899;"></div><svg style="left:4px;top:5px" width="7" height="4" shape-rendering="crispEdges"><path d="M3 0h1v1h1v1h1v1h1v1h-7v-1h1v-1h1v-1h1z" fill="#000"/></svg></div>
<div style="left:1005px;top:257px;width:17px;height:9px;background:#ECE9D8;border-top:1px solid #fff;border-left:1px solid #fff;border-right:1px solid #716F64;border-bottom:1px solid #716F64;"><div style="left:0;top:0;right:0;bottom:0;border-right:1px solid #ACA899;border-bottom:1px solid #ACA899;"></div></div>
<div style="left:1005px;top:379px;width:17px;height:17px;background:#ECE9D8;border-top:1px solid #fff;border-left:1px solid #fff;border-right:1px solid #716F64;border-bottom:1px solid #716F64;"><div style="left:0;top:0;right:0;bottom:0;border-right:1px solid #ACA899;border-bottom:1px solid #ACA899;"></div><svg style="left:4px;top:5px" width="7" height="4" shape-rendering="crispEdges"><path d="M0 0h7v1h-1v1h-1v1h-1v1h-1v-1h-1v-1h-1v-1h-1z" fill="#000"/></svg></div>
<div style="left:182px;top:396px;width:823px;height:17px;background-image:conic-gradient(#fff 25%,#ECE9D8 0 50%,#fff 0 75%,#ECE9D8 0);background-size:2px 2px;"></div>
<div style="left:182px;top:396px;width:7px;height:17px;background:#ECE9D8;border-left:1px solid #fff;border-top:1px solid #fff;border-right:1px solid #000;"></div>
<div style="left:189px;top:396px;width:17px;height:17px;background:#ECE9D8;border-top:1px solid #fff;border-left:1px solid #fff;border-right:1px solid #716F64;border-bottom:1px solid #716F64;"><div style="left:0;top:0;right:0;bottom:0;border-right:1px solid #ACA899;border-bottom:1px solid #ACA899;"></div><svg style="left:4px;top:4px" width="4" height="7" shape-rendering="crispEdges"><path d="M3 0h1v7h-1zM2 1h1v5h-1zM1 2h1v3h-1zM0 3h1v1h-1z" fill="#000"/></svg></div>
<div style="left:206px;top:396px;width:184px;height:17px;background:#ECE9D8;border-top:1px solid #fff;border-left:1px solid #fff;border-right:1px solid #716F64;border-bottom:1px solid #716F64;"><div style="left:0;top:0;right:0;bottom:0;border-right:1px solid #ACA899;border-bottom:1px solid #ACA899;"></div></div>
<div style="left:988px;top:396px;width:17px;height:17px;background:#ECE9D8;border-top:1px solid #fff;border-left:1px solid #fff;border-right:1px solid #716F64;border-bottom:1px solid #716F64;"><div style="left:0;top:0;right:0;bottom:0;border-right:1px solid #ACA899;border-bottom:1px solid #ACA899;"></div><svg style="left:6px;top:4px" width="4" height="7" shape-rendering="crispEdges"><path d="M0 0h1v7h-1zM1 1h1v5h-1zM2 2h1v3h-1zM3 3h1v1h-1z" fill="#000"/></svg></div>
<div style="left:1005px;top:396px;width:17px;height:17px;background:#ECE9D8;"></div>
<div style="left:181px;top:412px;width:8px;height:1px;background:#000;"></div>
<div style="left:181px;top:413px;width:842px;height:1px;background:#fff;"></div>
<div style="left:181px;top:414px;width:842px;height:1px;background:#fff;"></div>
<div style="left:181px;top:418px;width:11px;height:11px;background:#C8C8C8;border-top:1px solid #fff;border-left:1px solid #fff;border-right:1px solid #716F64;border-bottom:1px solid #716F64;"><div style="left:0;top:0;right:0;bottom:0;border-right:1px solid #ACA899;border-bottom:1px solid #ACA899;"></div><svg style="left:1px;top:2px" width="7" height="5" shape-rendering="crispEdges"><path d="M0 0h2v1h-2zM5 0h2v1h-2zM1 1h5v1h-5zM2 2h3v1h-3zM1 3h5v1h-5zM0 4h2v1h-2zM5 4h2v1h-2z" fill="#000"/></svg></div>
<div style="left:194px;top:418px;width:12px;height:11px;background:#C8C8C8;border-top:1px solid #fff;border-left:1px solid #fff;border-right:1px solid #716F64;border-bottom:1px solid #716F64;"><div style="left:0;top:0;right:0;bottom:0;border-right:1px solid #ACA899;border-bottom:1px solid #ACA899;"></div><svg style="left:3px;top:0px" width="4" height="8" shape-rendering="crispEdges"><path d="M3 0h1v8h-1zM2 1h1v6h-1zM1 2h1v4h-1zM0 3h1v2h-1z" fill="#000"/></svg></div>
<div style="left:208px;top:417px;width:50px;height:17px;background:#ECE9D8;border-top:1px solid #ACA899;border-left:1px solid #ACA899;border-right:1px solid #fff;border-bottom:1px solid #fff;"></div>
<div class="t" style="left:261px;top:419px;color:#000;">名称<span class="l">:</span></div>
<div style="left:295px;top:417px;width:186px;height:17px;background:#ff0;border-top:1px solid #ACA899;border-left:1px solid #ACA899;border-right:1px solid #fff;border-bottom:1px solid #fff;"></div>
<div class="t" style="left:484px;top:419px;color:#000;">地址值<span class="l">:</span></div>
<div style="left:530px;top:417px;width:71px;height:17px;background:#ff0;border-top:1px solid #ACA899;border-left:1px solid #ACA899;border-right:1px solid #fff;border-bottom:1px solid #fff;"></div>
<div class="t" style="left:532px;top:418px;color:#000;"><span class="l">DM326</span></div>
<div class="t" style="left:603px;top:419px;color:#000;">注释<span class="l">:</span></div>
<div style="left:638px;top:417px;width:386px;height:17px;background:#ff0;border-top:1px solid #ACA899;border-left:1px solid #ACA899;border-right:1px solid #fff;border-bottom:1px solid #fff;"></div>
<div style="left:0px;top:432px;width:181px;height:1px;background:#ACA899;"></div>
<div style="left:0px;top:433px;width:181px;height:1px;background:#fff;"></div>
<div style="left:0px;top:438px;width:1024px;height:1px;background:#000;"></div>
<div style="left:5px;top:444px;width:11px;height:11px;background:#ECE9D8;border-top:1px solid #fff;border-left:1px solid #fff;border-right:1px solid #716F64;border-bottom:1px solid #716F64;"><div style="left:0;top:0;right:0;bottom:0;border-right:1px solid #ACA899;border-bottom:1px solid #ACA899;"></div><svg style="left:1px;top:2px" width="6" height="5" shape-rendering="crispEdges"><path d="M0 0h2v1h-2zM4 0h2v1h-2zM1 1h4v1h-4zM2 2h2v1h-2zM1 3h4v1h-4zM0 4h2v1h-2zM4 4h2v1h-2z" fill="#000"/></svg></div>
<div style="left:4px;top:456px;width:12px;height:12px;background:#ECE9D8;border-top:1px solid #fff;border-left:1px solid #fff;border-right:1px solid #716F64;border-bottom:1px solid #716F64;"><div style="left:0;top:0;right:0;bottom:0;border-right:1px solid #ACA899;border-bottom:1px solid #ACA899;"></div><svg style="left:3px;top:2px" width="4" height="7" shape-rendering="crispEdges"><path d="M0 0v7L4 3.5z" fill="#ACA899"/></svg></div>
<div style="left:7px;top:470px;width:3px;height:143px;border-left:1px solid #fff;border-top:1px solid #fff;border-right:1px solid #ACA899;border-bottom:1px solid #ACA899;"></div>
<div style="left:11px;top:470px;width:3px;height:143px;border-left:1px solid #fff;border-top:1px solid #fff;border-right:1px solid #ACA899;border-bottom:1px solid #ACA899;"></div>
<div style="left:18px;top:442px;width:1003px;height:173px;background:#fff;border-top:1px solid #ACA899;border-left:1px solid #ACA899;border-right:1px solid #fff;border-bottom:1px solid #fff;"><div style="left:0;top:0;right:0;bottom:0;border-top:1px solid #716F64;border-left:1px solid #716F64;border-right:1px solid #ECE9D8;border-bottom:1px solid #ECE9D8;"></div></div>
<div style="left:1019px;top:444px;width:1px;height:170px;background:#ECE9D8;"></div>
<div style="left:20px;top:444px;width:983px;height:153px;overflow:hidden;background:#fff">
<div style="left:0;top:0;width:982px;height:12px;background:#316AC5;outline:1px dotted #E8A33C;outline-offset:-1px"></div>
<div class="t" style="left:2px;top:0px;color:#fff">警告<span class="l">:</span>对于此指令操作数，符号<span class="l"> P_Month_Year</span>的数据类型<span class="l">(UINT_BCD)</span>与数据类型<span class="l">(UINT)</span>不兼容在第<span class="l">578</span>条<span class="l">( 6, 0 ) .</span></div>
<div class="t" style="left:2px;top:12px;color:#000">警告<span class="l">:</span>对于此指令操作数，符号<span class="l"> P_Hour_Date</span>的数据类型<span class="l">(UINT_BCD)</span>与数据类型<span class="l">(UINT)</span>不兼容在第<span class="l">579</span>条<span class="l">( 6, 4 ) .</span></div>
<div class="t" style="left:2px;top:24px;color:#000">警告<span class="l">:</span>对于此指令操作数，符号<span class="l"> P_Hour_Date</span>的数据类型<span class="l">(UINT_BCD)</span>与数据类型<span class="l">(UINT)</span>不兼容在第<span class="l">579</span>条<span class="l">( 6, 0 ) .</span></div>
<div class="t" style="left:2px;top:36px;color:#000">警告<span class="l">:</span>对于此指令操作数，符号<span class="l"> P_Sec_Min</span>的数据类型<span class="l">(UINT_BCD)</span>与数据类型<span class="l">(UINT)</span>不兼容在第<span class="l">580</span>条<span class="l">( 6, 0 ) .</span></div>
<div class="t" style="left:2px;top:48px;color:#000">错误<span class="l">:</span>操作数缺失在第<span class="l">591</span>条<span class="l">( 6, 1 ) .</span></div>
<div class="t" style="left:2px;top:60px;color:#000">错误<span class="l">:</span>操作数<span class="l"> 1 </span>内存区无效在第<span class="l">591</span>条<span class="l">( 6, 2 ) .</span></div>
<div class="t" style="left:2px;top:72px;color:#000">错误<span class="l">:</span>操作数缺失在第<span class="l">602</span>条<span class="l">( 6, 0 ) .</span></div>
<div class="t" style="left:2px;top:84px;color:#000">错误<span class="l">:</span>操作数<span class="l"> 1 </span>内存区无效在第<span class="l">602</span>条<span class="l">( 6, 1 ) .</span></div>
<div class="t" style="left:2px;top:96px;color:#000">错误<span class="l">:</span>操作数缺失在第<span class="l">620</span>条<span class="l">( 6, 1 ) .</span></div>
<div class="t" style="left:2px;top:108px;color:#000">错误<span class="l">:</span>操作数<span class="l"> 1 </span>内存区无效在第<span class="l">620</span>条<span class="l">( 6, 2 ) .</span></div>
<div class="t" style="left:2px;top:120px;color:#000"></div>
<div class="t" style="left:2px;top:132px;color:#000">新程序<span class="l">1 - 8 </span>错误<span class="l">, 5 </span>警告<span class="l">.</span></div>
</div>
<div style="left:1003px;top:444px;width:16px;height:153px;background:#F6F5F0;"></div>
<div style="left:1003px;top:444px;width:16px;height:17px;border:1px solid #fff;border-radius:3px;background:linear-gradient(135deg,#CBDAFD 20%,#B7CAF9 90%);box-shadow:inset 0 0 0 1px #D6E1FD,inset -1px -1px 0 1px #AEC2F4;"><svg style="left:-1px;top:-1px" width="17" height="17"><path d="M4.5 10L8 6.5l3.5 3.5" stroke="#4D6185" stroke-width="2.4" fill="none"/></svg></div>
<div style="left:1003px;top:505px;width:16px;height:75px;border:1px solid #fff;border-radius:3px;background:linear-gradient(90deg,#C9D8FD,#B9CBF9);box-shadow:inset 0 0 0 1px #D6E1FD,inset -1px -1px 0 1px #AEC2F4;"><div style="left:4px;top:32px;width:7px;height:8px;background-image:linear-gradient(180deg,#EEF4FE 50%,#8CB0F8 0);background-size:1px 2px"></div></div>
<div style="left:1003px;top:580px;width:16px;height:17px;border:1px solid #fff;border-radius:3px;background:linear-gradient(135deg,#CBDAFD 20%,#B7CAF9 90%);box-shadow:inset 0 0 0 1px #D6E1FD,inset -1px -1px 0 1px #AEC2F4;"><svg style="left:-1px;top:-1px" width="17" height="17"><path d="M4.5 7L8 10.5l3.5-3.5" stroke="#4D6185" stroke-width="2.4" fill="none"/></svg></div>
<div style="left:20px;top:597px;width:1000px;height:17px;background:#ECE9D8;"></div>
<div style="left:135px;top:597px;width:825px;height:1px;background:#000;"></div>
<div style="left:20px;top:597px;width:73px;height:1px;background:#000;"></div>
<div style="left:20px;top:598px;width:18px;height:16px;background:#ECE9D8;border-left:1px solid #fff;border-top:1px solid #fff;border-right:1px solid #000;border-bottom:1px solid #ACA899;"><svg style="left:-1px;top:-1px" width="18" height="16"><path d="M5 3h2v11h-2zM7 8.5L14 3v11z" fill="#fff" transform="translate(1,1)"/><path d="M5 3h2v11h-2zM7 8.5L14 3v11z" fill="#ACA899"/></svg></div>
<div style="left:38px;top:598px;width:18px;height:16px;background:#ECE9D8;border-left:1px solid #fff;border-top:1px solid #fff;border-right:1px solid #000;border-bottom:1px solid #ACA899;"><svg style="left:-1px;top:-1px" width="18" height="16"><path d="M5 8.5L11 3.5v10z" fill="#fff" transform="translate(1,1)"/><path d="M5 8.5L11 3.5v10z" fill="#ACA899"/></svg></div>
<div style="left:56px;top:598px;width:18px;height:16px;background:#ECE9D8;border-left:1px solid #fff;border-top:1px solid #fff;border-right:1px solid #000;border-bottom:1px solid #ACA899;"><svg style="left:-1px;top:-1px" width="18" height="16"><path d="M6 3.5v10L12 8.5z" fill="#fff" transform="translate(1,1)"/><path d="M6 3.5v10L12 8.5z" fill="#ACA899"/></svg></div>
<div style="left:74px;top:598px;width:18px;height:16px;background:#ECE9D8;border-left:1px solid #fff;border-top:1px solid #fff;border-right:1px solid #000;border-bottom:1px solid #ACA899;"><svg style="left:-1px;top:-1px" width="18" height="16"><path d="M5 3v11L12 8.5zM12 3h2v11h-2z" fill="#fff" transform="translate(1,1)"/><path d="M5 3v11L12 8.5zM12 3h2v11h-2z" fill="#ACA899"/></svg></div>
<svg style="left:92px;top:597px" width="160" height="19"><path d="M0.5 0L6.5 16.5H37.5L43.5 0" fill="#fff" stroke="#000"/><path d="M41.5 8L45 16.5H100L104 0.5" fill="none" stroke="#000"/><path d="M104 8L108 16.5H140L144.5 0.5" fill="none" stroke="#000"/><path d="M1.5 0H42.5" stroke="#fff" stroke-width="2"/></svg>
<div class="t" style="left:101px;top:599px;color:#000;">编译</div>
<div class="t" style="left:141px;top:599px;color:#000;">查找报表</div>
<div class="t" style="left:204px;top:599px;color:#000;">传送</div>
<div style="left:959px;top:597px;width:1px;height:17px;background:#000;"></div>
<div style="left:963px;top:597px;width:1px;height:17px;background:#000;"></div>
<div style="left:964px;top:598px;width:16px;height:16px;background:#ECE9D8;border-top:1px solid #fff;border-left:1px solid #fff;border-right:1px solid #716F64;border-bottom:1px solid #716F64;"><div style="left:0;top:0;right:0;bottom:0;border-right:1px solid #ACA899;border-bottom:1px solid #ACA899;"></div><svg style="left:4px;top:3px" width="4" height="7" shape-rendering="crispEdges"><path d="M4 0v7L0 3.5z" fill="#000"/></svg></div>
<div style="left:980px;top:598px;width:18px;height:16px;background:#ECE9D8;border-top:1px solid #fff;border-left:1px solid #fff;border-right:1px solid #716F64;border-bottom:1px solid #716F64;"><div style="left:0;top:0;right:0;bottom:0;border-right:1px solid #ACA899;border-bottom:1px solid #ACA899;"></div></div>
<div style="left:1004px;top:598px;width:16px;height:16px;background:#ECE9D8;border-top:1px solid #fff;border-left:1px solid #fff;border-right:1px solid #716F64;border-bottom:1px solid #716F64;"><div style="left:0;top:0;right:0;bottom:0;border-right:1px solid #ACA899;border-bottom:1px solid #ACA899;"></div><svg style="left:5px;top:3px" width="4" height="7" shape-rendering="crispEdges"><path d="M0 0v7L4 3.5z" fill="#000"/></svg></div>
<div style="left:0px;top:615px;width:1024px;height:1px;background:#fff;"></div>
<div style="left:996px;top:567px;width:74px;height:74px;border-radius:50%;background:rgba(48,150,216,0.86);box-shadow:0 0 3px rgba(48,150,216,0.7)"></div>
<div style="left:998px;top:594px;font:bold 12px/14px 'Liberation Sans',sans-serif;color:#fff;letter-spacing:-0.2px">34%</div>
</body></html>
